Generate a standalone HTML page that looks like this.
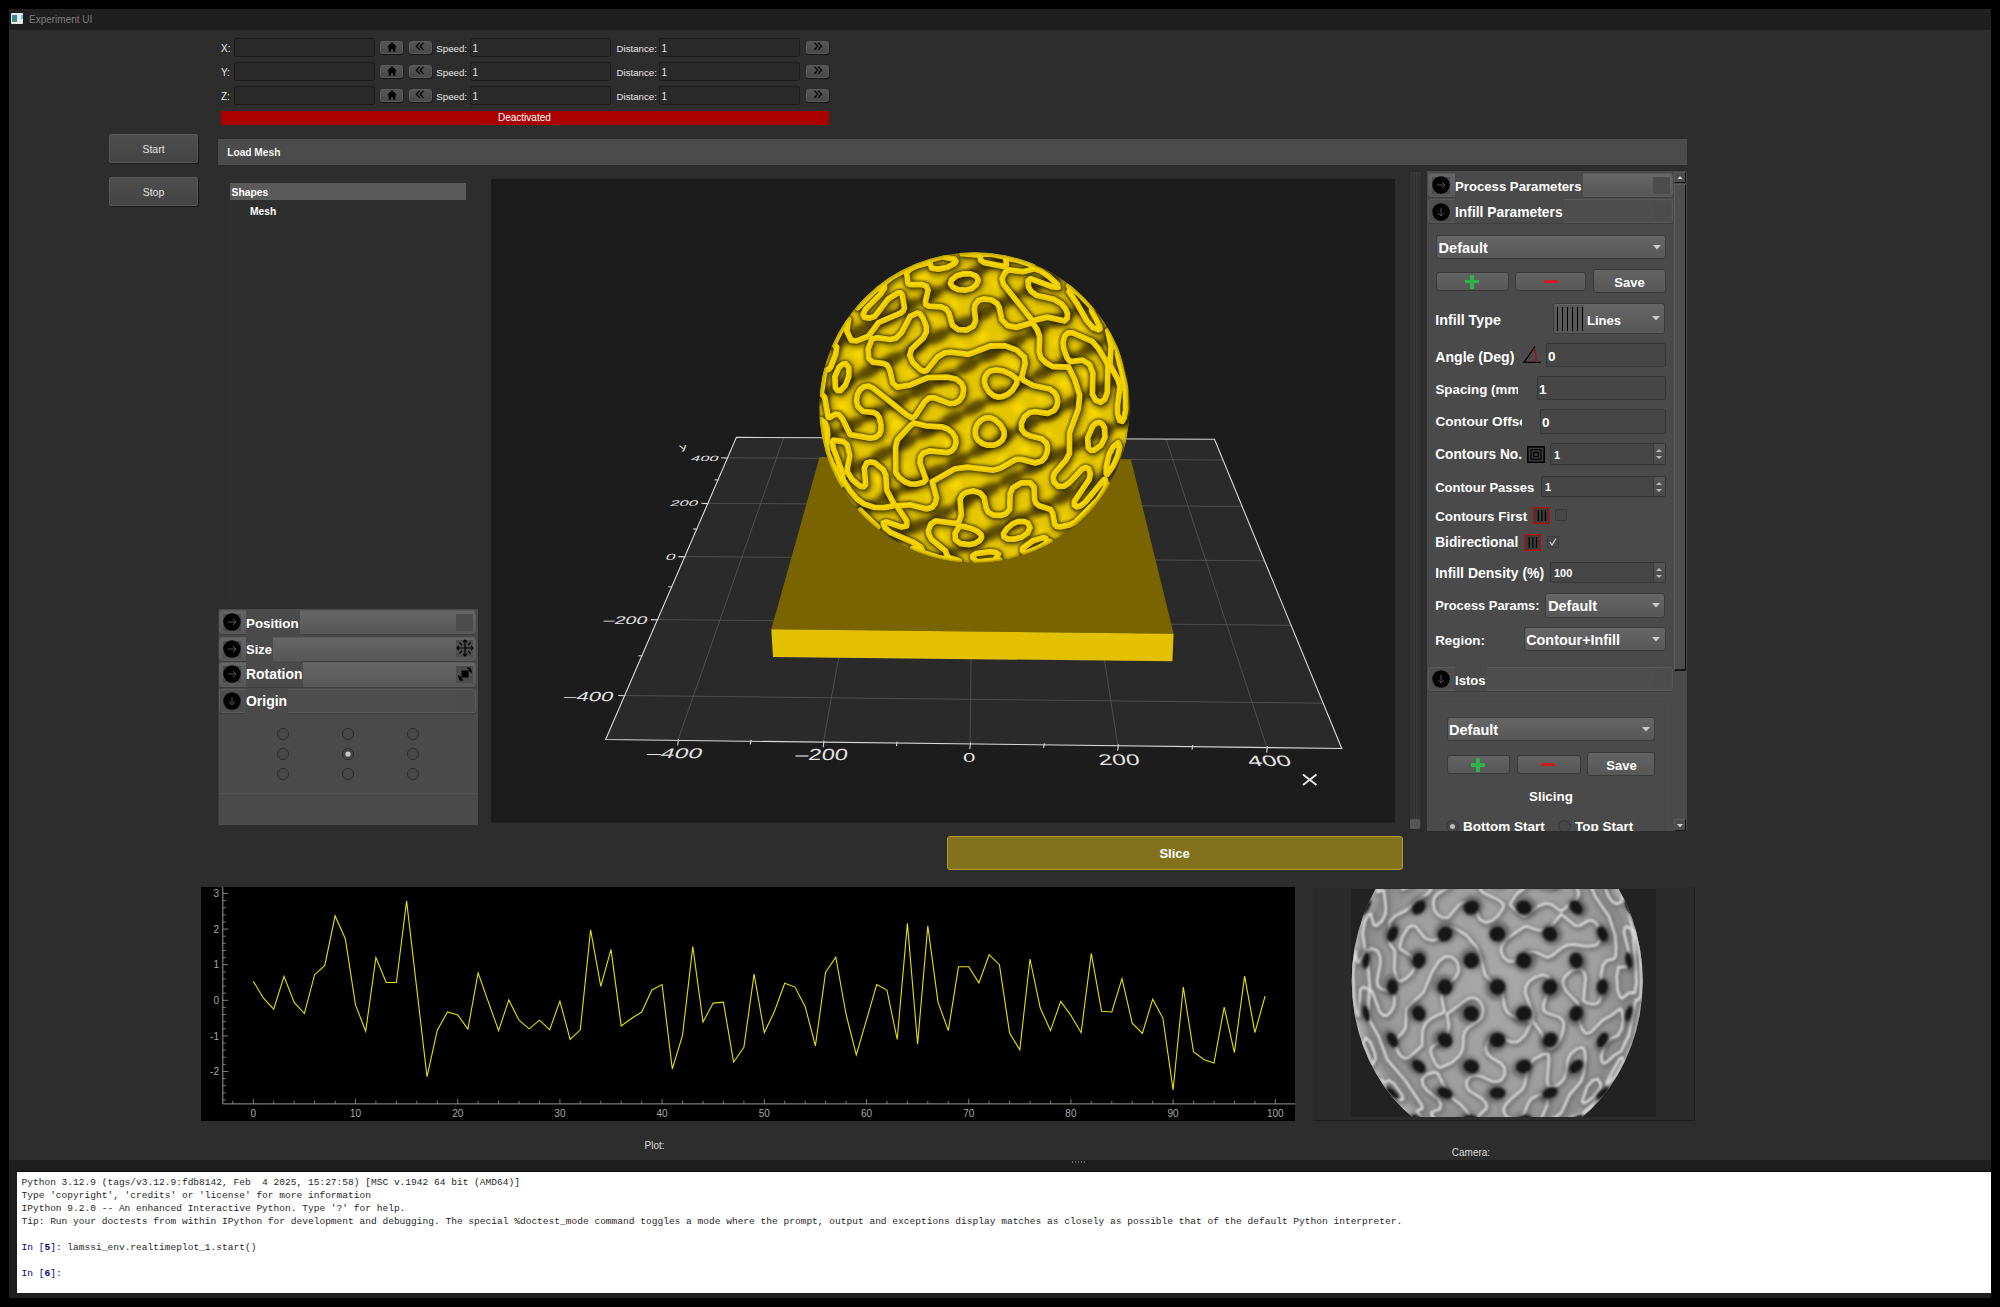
<!DOCTYPE html><html><head><meta charset="utf-8"><title>Experiment UI</title><style>
*{box-sizing:border-box;margin:0;padding:0}
html,body{width:2000px;height:1307px;overflow:hidden;background:#000}
body{position:relative;font-family:"Liberation Sans",sans-serif;color:#ddd}
.a{position:absolute}
.t{position:absolute;white-space:nowrap;line-height:1}
.inp{position:absolute;background:#2a2a2a;border:1px solid #1d1d1d;border-radius:2px}
.sb{position:absolute;background:linear-gradient(#555,#484848);border:1px solid #5a5a5a;border-radius:2.5px;box-shadow:0.5px 1px 0 #161616}
.btn{position:absolute;background:linear-gradient(#4e4e4e,#444);border:1px solid #575757;border-radius:2px;box-shadow:1px 1px 0 #1a1a1a}
.hdr{position:absolute;border:1px solid #5a5a5a;border-radius:3px;background:linear-gradient(#666,#575757);box-shadow:0 1px 0 #3e3e3e}
.hic{position:absolute;background:#4c4c4c}
.lbg{position:absolute;background:#4a4a4a}
.pin{position:absolute;background:#464646;border:1px solid #363636;border-radius:2px}
.cmb{position:absolute;background:linear-gradient(#666,#575757);border:1px solid #3c3c3c;border-radius:3px}
.pbtn{position:absolute;background:linear-gradient(#636363,#575757);border:1px solid #3a3a3a;border-radius:3px}
</style></head><body>
<div class="a" style="left:9px;top:9px;width:1982px;height:21px;background:#1f1f1f"></div>
<div class="a" style="left:9px;top:30px;width:1982px;height:1130px;background:#2d2d2d"></div>
<div class="a" style="left:9px;top:1160px;width:1982px;height:138px;background:#1e1e1e"></div>
<div class="a" style="left:11px;top:13px;width:12px;height:11px;background:#e8e8e8;border-radius:1px"></div>
<div class="a" style="left:12px;top:15px;width:5px;height:7px;background:linear-gradient(#3a7bb0,#3aa060)"></div>
<div class="a" style="left:21px;top:15px;width:2px;height:4px;background:#6cc"></div>
<div class="t" style="left:29.00px;top:14.54px;font-size:10px;color:#7c7c7c;">Experiment UI</div>
<div class="t" style="left:221.00px;top:43.53px;font-size:10px;color:#e6e6e6;">X:</div>
<div class="inp" style="left:234px;top:38px;width:141px;height:19px"></div>
<div class="sb" style="left:380px;top:40.5px;width:23px;height:13px"><svg width="10" height="10" viewBox="0 0 10 10" style="position:absolute;left:5.5px;top:0.2px"><path d="M5 0.2 L9.9 5 L8.4 5 L8.4 9.6 L6 9.6 L6 6.9 L4 6.9 L4 9.6 L1.6 9.6 L1.6 5 L0.1 5 Z" fill="#000"/></svg></div>
<div class="sb" style="left:408.5px;top:40.5px;width:23px;height:13px"><svg width="10" height="9" viewBox="0 0 10 9" style="position:absolute;left:5.5px;top:0.8px"><path d="M4.8 0.6 L1.3 4.2 L4.8 7.8 M8.6 0.6 L5.1 4.2 L8.6 7.8" stroke="#000" stroke-width="1.25" fill="none"/></svg></div>
<div class="t" style="left:436.30px;top:43.79px;font-size:9.7px;color:#e6e6e6;">Speed:</div>
<div class="inp" style="left:470px;top:38px;width:141px;height:19px"></div>
<div class="t" style="left:472.50px;top:43.53px;font-size:10px;color:#e6e6e6;">1</div>
<div class="t" style="left:616.50px;top:43.79px;font-size:9.7px;color:#e6e6e6;">Distance:</div>
<div class="inp" style="left:659px;top:38px;width:141px;height:19px"></div>
<div class="t" style="left:661.50px;top:43.53px;font-size:10px;color:#e6e6e6;">1</div>
<div class="sb" style="left:805.5px;top:40.5px;width:23px;height:13px"><svg width="10" height="9" viewBox="0 0 10 9" style="position:absolute;left:6px;top:0.8px"><path d="M1.4 0.6 L4.9 4.2 L1.4 7.8 M5.2 0.6 L8.7 4.2 L5.2 7.8" stroke="#000" stroke-width="1.25" fill="none"/></svg></div>
<div class="t" style="left:221.00px;top:67.53px;font-size:10px;color:#e6e6e6;">Y:</div>
<div class="inp" style="left:234px;top:62px;width:141px;height:19px"></div>
<div class="sb" style="left:380px;top:64.5px;width:23px;height:13px"><svg width="10" height="10" viewBox="0 0 10 10" style="position:absolute;left:5.5px;top:0.2px"><path d="M5 0.2 L9.9 5 L8.4 5 L8.4 9.6 L6 9.6 L6 6.9 L4 6.9 L4 9.6 L1.6 9.6 L1.6 5 L0.1 5 Z" fill="#000"/></svg></div>
<div class="sb" style="left:408.5px;top:64.5px;width:23px;height:13px"><svg width="10" height="9" viewBox="0 0 10 9" style="position:absolute;left:5.5px;top:0.8px"><path d="M4.8 0.6 L1.3 4.2 L4.8 7.8 M8.6 0.6 L5.1 4.2 L8.6 7.8" stroke="#000" stroke-width="1.25" fill="none"/></svg></div>
<div class="t" style="left:436.30px;top:67.79px;font-size:9.7px;color:#e6e6e6;">Speed:</div>
<div class="inp" style="left:470px;top:62px;width:141px;height:19px"></div>
<div class="t" style="left:472.50px;top:67.53px;font-size:10px;color:#e6e6e6;">1</div>
<div class="t" style="left:616.50px;top:67.79px;font-size:9.7px;color:#e6e6e6;">Distance:</div>
<div class="inp" style="left:659px;top:62px;width:141px;height:19px"></div>
<div class="t" style="left:661.50px;top:67.53px;font-size:10px;color:#e6e6e6;">1</div>
<div class="sb" style="left:805.5px;top:64.5px;width:23px;height:13px"><svg width="10" height="9" viewBox="0 0 10 9" style="position:absolute;left:6px;top:0.8px"><path d="M1.4 0.6 L4.9 4.2 L1.4 7.8 M5.2 0.6 L8.7 4.2 L5.2 7.8" stroke="#000" stroke-width="1.25" fill="none"/></svg></div>
<div class="t" style="left:221.00px;top:91.53px;font-size:10px;color:#e6e6e6;">Z:</div>
<div class="inp" style="left:234px;top:86px;width:141px;height:19px"></div>
<div class="sb" style="left:380px;top:88.5px;width:23px;height:13px"><svg width="10" height="10" viewBox="0 0 10 10" style="position:absolute;left:5.5px;top:0.2px"><path d="M5 0.2 L9.9 5 L8.4 5 L8.4 9.6 L6 9.6 L6 6.9 L4 6.9 L4 9.6 L1.6 9.6 L1.6 5 L0.1 5 Z" fill="#000"/></svg></div>
<div class="sb" style="left:408.5px;top:88.5px;width:23px;height:13px"><svg width="10" height="9" viewBox="0 0 10 9" style="position:absolute;left:5.5px;top:0.8px"><path d="M4.8 0.6 L1.3 4.2 L4.8 7.8 M8.6 0.6 L5.1 4.2 L8.6 7.8" stroke="#000" stroke-width="1.25" fill="none"/></svg></div>
<div class="t" style="left:436.30px;top:91.79px;font-size:9.7px;color:#e6e6e6;">Speed:</div>
<div class="inp" style="left:470px;top:86px;width:141px;height:19px"></div>
<div class="t" style="left:472.50px;top:91.53px;font-size:10px;color:#e6e6e6;">1</div>
<div class="t" style="left:616.50px;top:91.79px;font-size:9.7px;color:#e6e6e6;">Distance:</div>
<div class="inp" style="left:659px;top:86px;width:141px;height:19px"></div>
<div class="t" style="left:661.50px;top:91.53px;font-size:10px;color:#e6e6e6;">1</div>
<div class="sb" style="left:805.5px;top:88.5px;width:23px;height:13px"><svg width="10" height="9" viewBox="0 0 10 9" style="position:absolute;left:6px;top:0.8px"><path d="M1.4 0.6 L4.9 4.2 L1.4 7.8 M5.2 0.6 L8.7 4.2 L5.2 7.8" stroke="#000" stroke-width="1.25" fill="none"/></svg></div>
<div class="a" style="left:221px;top:110.5px;width:608px;height:14.5px;background:#ac0000"></div>
<div class="t" style="left:498.00px;top:113.33px;font-size:10px;color:#fff;">Deactivated</div>
<div class="btn" style="left:109px;top:134px;width:89px;height:29px"></div>
<div class="t" style="left:142.41px;top:144.11px;font-size:10.5px;color:#e0e0e0;">Start</div>
<div class="btn" style="left:109px;top:177px;width:89px;height:29px"></div>
<div class="t" style="left:142.70px;top:187.11px;font-size:10.5px;color:#e0e0e0;">Stop</div>
<div class="a" style="left:218px;top:139px;width:1469px;height:26px;background:#4b4b4b"></div>
<div class="t" style="left:227.20px;top:148.37px;font-size:10.2px;color:#f4f4f4;font-weight:bold;">Load Mesh</div>
<div class="a" style="left:226px;top:178px;width:247px;height:424px;background:#2e2e2e"></div>
<div class="a" style="left:230px;top:183px;width:236px;height:17px;background:#5a5a5a"></div>
<div class="t" style="left:231.60px;top:188.28px;font-size:10.3px;color:#fff;font-weight:bold;">Shapes</div>
<div class="t" style="left:250.00px;top:207.28px;font-size:10.3px;color:#fff;font-weight:bold;">Mesh</div>
<div class="a" style="left:218px;top:609px;width:260px;height:216px;background:#4a4a4a;border-left:1px solid #3a3a3a"></div>
<div class="hdr" style="left:219px;top:610px;width:257px;height:24.3px;"></div>
<div class="hic" style="left:223px;top:614px;width:18px;height:17px"></div>
<svg class="a" style="left:222.90px;top:613.40px" width="18" height="18" viewBox="-9 -9 18 18"><circle r="8.7" fill="#000"/><path d="M-4.3 0 L4 0 M1 -3 L4 0 L1 3" stroke="#5c5c5c" stroke-width="0.9" fill="none"/></svg>
<div class="lbg" style="left:245.5px;top:609.4px;width:54.2px;height:25.5px"></div>
<div class="hic" style="left:456px;top:613.5px;width:17px;height:17px"></div>
<div class="t" style="left:246.00px;top:616.90px;font-size:13.35px;color:#fff;font-weight:bold;">Position</div>
<div class="hdr" style="left:219px;top:636.6px;width:257px;height:24.1px;"></div>
<div class="hic" style="left:223px;top:640.6px;width:18px;height:17px"></div>
<svg class="a" style="left:222.90px;top:640.00px" width="18" height="18" viewBox="-9 -9 18 18"><circle r="8.7" fill="#000"/><path d="M-4.3 0 L4 0 M1 -3 L4 0 L1 3" stroke="#5c5c5c" stroke-width="0.9" fill="none"/></svg>
<div class="lbg" style="left:245.5px;top:636.0px;width:27.4px;height:25.3px"></div>
<div class="hic" style="left:456px;top:640.1px;width:17px;height:17px"></div>
<div class="t" style="left:246.00px;top:643.85px;font-size:12.94px;color:#fff;font-weight:bold;">Size</div>
<svg class="a" style="left:456px;top:639px" width="18" height="18" viewBox="0 0 18 18"><g stroke="#000" stroke-width="1.2" fill="none"><path d="M9 1 V17 M1 9 H17"/><path d="M7 3 L9 1 L11 3 M7 15 L9 17 L11 15 M3 7 L1 9 L3 11 M15 7 L17 9 L15 11"/><path d="M3.5 3.5 L6 6 M14.5 3.5 L12 6 M3.5 14.5 L6 12 M14.5 14.5 L12 12"/></g></svg>
<div class="hdr" style="left:219px;top:662px;width:257px;height:24.6px;"></div>
<div class="hic" style="left:223px;top:666px;width:18px;height:17px"></div>
<svg class="a" style="left:222.90px;top:665.40px" width="18" height="18" viewBox="-9 -9 18 18"><circle r="8.7" fill="#000"/><path d="M-4.3 0 L4 0 M1 -3 L4 0 L1 3" stroke="#5c5c5c" stroke-width="0.9" fill="none"/></svg>
<div class="lbg" style="left:245.5px;top:661.4px;width:57.9px;height:25.8px"></div>
<div class="hic" style="left:456px;top:665.5px;width:17px;height:17px"></div>
<div class="t" style="left:246.00px;top:668.43px;font-size:13.91px;color:#fff;font-weight:bold;">Rotation</div>
<svg class="a" style="left:456px;top:665px" width="18" height="18" viewBox="0 0 18 18"><rect x="5.5" y="5.5" width="7" height="7" fill="#000"/><path d="M11 2.5 A7 7 0 0 1 15.5 7.5 M7 15.5 A7 7 0 0 1 2.5 10.5" stroke="#000" stroke-width="1.2" fill="none"/><path d="M14 1.5 L15.8 7.8 L12 5.5 Z M4 16.5 L2.2 10.2 L6 12.5Z" fill="#000"/></svg>
<div class="hdr" style="left:219px;top:689px;width:257px;height:24px;background:#4e4e4e;"></div>
<div class="hic" style="left:223px;top:693px;width:18px;height:17px"></div>
<svg class="a" style="left:222.90px;top:692.40px" width="18" height="18" viewBox="-9 -9 18 18"><circle r="8.7" fill="#000"/><path d="M0 -4.3 L0 4 M-3 1 L0 4 L3 1" stroke="#5c5c5c" stroke-width="0.9" fill="none"/></svg>
<div class="lbg" style="left:245.5px;top:688.4px;width:42.6px;height:25.2px"></div>
<div class="hic" style="left:456px;top:692.5px;width:17px;height:17px"></div>
<div class="t" style="left:246.00px;top:695.38px;font-size:13.96px;color:#fff;font-weight:bold;">Origin</div>
<svg class="a" style="left:275.7px;top:727.3px" width="14" height="14" viewBox="-7 -7 14 14"><circle r="5.6" fill="#474747" stroke="#2e2e2e" stroke-width="1"/></svg>
<svg class="a" style="left:275.7px;top:747.4px" width="14" height="14" viewBox="-7 -7 14 14"><circle r="5.6" fill="#474747" stroke="#2e2e2e" stroke-width="1"/></svg>
<svg class="a" style="left:275.7px;top:767.3px" width="14" height="14" viewBox="-7 -7 14 14"><circle r="5.6" fill="#474747" stroke="#2e2e2e" stroke-width="1"/></svg>
<svg class="a" style="left:340.9px;top:727.3px" width="14" height="14" viewBox="-7 -7 14 14"><circle r="5.6" fill="#474747" stroke="#2e2e2e" stroke-width="1"/></svg>
<svg class="a" style="left:340.9px;top:747.4px" width="14" height="14" viewBox="-7 -7 14 14"><circle r="5.6" fill="#474747" stroke="#2e2e2e" stroke-width="1"/><circle r="2.6" fill="#c8c8c8"/></svg>
<svg class="a" style="left:340.9px;top:767.3px" width="14" height="14" viewBox="-7 -7 14 14"><circle r="5.6" fill="#474747" stroke="#2e2e2e" stroke-width="1"/></svg>
<svg class="a" style="left:406.0px;top:727.3px" width="14" height="14" viewBox="-7 -7 14 14"><circle r="5.6" fill="#474747" stroke="#2e2e2e" stroke-width="1"/></svg>
<svg class="a" style="left:406.0px;top:747.4px" width="14" height="14" viewBox="-7 -7 14 14"><circle r="5.6" fill="#474747" stroke="#2e2e2e" stroke-width="1"/></svg>
<svg class="a" style="left:406.0px;top:767.3px" width="14" height="14" viewBox="-7 -7 14 14"><circle r="5.6" fill="#474747" stroke="#2e2e2e" stroke-width="1"/></svg>
<div class="a" style="left:219px;top:793px;width:258px;height:1px;background:#525252"></div>
<div class="a" style="left:1409px;top:171px;width:13px;height:659px;background:#343434;border:1px solid #2a2a2a"></div>
<div class="a" style="left:1414px;top:172px;width:3px;height:646px;background:#2f2f2f;border-left:1px solid #3c3c3c;border-right:1px solid #3c3c3c"></div>
<div class="a" style="left:1410px;top:819px;width:10px;height:10px;background:#555;border-radius:2px"></div>
<div class="a" style="left:1427px;top:171px;width:260px;height:660px;background:#4a4a4a;overflow:hidden">
<div class="hdr" style="left:1px;top:2px;width:245px;height:24px;"></div>
<div class="hic" style="left:5px;top:6px;width:18px;height:17px"></div>
<svg class="a" style="left:4.90px;top:5.40px" width="18" height="18" viewBox="-9 -9 18 18"><circle r="8.7" fill="#000"/><path d="M-4.3 0 L4 0 M1 -3 L4 0 L1 3" stroke="#5c5c5c" stroke-width="0.9" fill="none"/></svg>
<div class="lbg" style="left:27.5px;top:1.4px;width:128.1px;height:25.2px"></div>
<div class="hic" style="left:226px;top:5.5px;width:17px;height:17px"></div>
<div class="t" style="left:28.00px;top:9.06px;font-size:13.16px;color:#fff;font-weight:bold;">Process Parameters</div>
<div class="hdr" style="left:1px;top:28.30000000000001px;width:245px;height:23.5px;background:#4e4e4e;"></div>
<div class="hic" style="left:5px;top:32.30000000000001px;width:18px;height:17px"></div>
<svg class="a" style="left:4.90px;top:31.70px" width="18" height="18" viewBox="-9 -9 18 18"><circle r="8.7" fill="#000"/><path d="M0 -4.3 L0 4 M-3 1 L0 4 L3 1" stroke="#5c5c5c" stroke-width="0.9" fill="none"/></svg>
<div class="lbg" style="left:27.5px;top:27.70000000000001px;width:109.1px;height:24.7px"></div>
<div class="hic" style="left:226px;top:31.80000000000001px;width:17px;height:17px"></div>
<div class="t" style="left:28.00px;top:34.79px;font-size:13.83px;color:#fff;font-weight:bold;">Infill Parameters</div>
<div class="cmb" style="left:9.0px;top:64.0px;width:230.0px;height:24.0px;"></div>
<div class="t" style="left:11.60px;top:69.71px;font-size:14.52px;color:#fff;font-weight:bold;">Default</div>
<svg class="a" style="left:225.5px;top:73.5px" width="8" height="5" viewBox="0 0 8 5"><path d="M0 0 H8 L4 4.5Z" fill="#ccc"/></svg>
<div class="pbtn" style="left:9.0px;top:101.0px;width:72.5px;height:19.0px;"></div>
<div class="a" style="left:38.0px;top:108.5px;width:14.0px;height:3.5px;background:#2db34a"></div>
<div class="a" style="left:43.3px;top:103.5px;width:3.5px;height:14.0px;background:#2db34a"></div>
<div class="pbtn" style="left:88.0px;top:101.0px;width:71.0px;height:19.0px;"></div>
<div class="a" style="left:117.0px;top:108.5px;width:14.0px;height:3.5px;background:#cc2020"></div>
<div class="pbtn" style="left:166.0px;top:98.0px;width:73.0px;height:24.0px;"></div>
<div class="t" style="left:187.30px;top:104.91px;font-size:13.1px;color:#fff;font-weight:bold;">Save</div>
<div class="t" style="left:8.20px;top:141.67px;font-size:14.33px;color:#fff;font-weight:bold;">Infill Type</div>
<div class="cmb" style="left:125.7px;top:132.0px;width:112.8px;height:31.2px;"></div>
<div class="a" style="left:127.0px;top:133.5px;width:30.0px;height:28.5px;background:#585858"></div>
<div class="a" style="left:129.5px;top:135.5px;width:1.1px;height:24.5px;background:#000"></div>
<div class="a" style="left:134.5px;top:135.5px;width:1.1px;height:24.5px;background:#000"></div>
<div class="a" style="left:139.6px;top:135.5px;width:1.1px;height:24.5px;background:#000"></div>
<div class="a" style="left:144.7px;top:135.5px;width:1.1px;height:24.5px;background:#000"></div>
<div class="a" style="left:149.7px;top:135.5px;width:1.1px;height:24.5px;background:#000"></div>
<div class="a" style="left:154.8px;top:135.5px;width:1.1px;height:24.5px;background:#000"></div>
<div class="t" style="left:160.00px;top:143.44px;font-size:13.06px;color:#fff;font-weight:bold;">Lines</div>
<svg class="a" style="left:225.0px;top:145.0px" width="8" height="5" viewBox="0 0 8 5"><path d="M0 0 H8 L4 4.5Z" fill="#ccc"/></svg>
<div class="t" style="left:8.20px;top:179.04px;font-size:14.13px;color:#fff;font-weight:bold;">Angle (Deg)</div>
<svg class="a" style="left:96px;top:174px" width="19" height="19" viewBox="0 0 19 19"><path d="M12 1.5 L1 17.3 H18" stroke="#000" stroke-width="1.3" fill="none"/><path d="M10.8 3.5 Q13.8 8 12.8 17" stroke="#b00" stroke-width="1.2" fill="none"/></svg>
<div class="pin" style="left:119.0px;top:172.3px;width:120.0px;height:24.2px;"></div>
<div class="t" style="left:121.00px;top:178.57px;font-size:13.5px;color:#fff;font-weight:bold;">0</div>
<div class="a" style="left:8px;top:204px;width:83px;height:24px;overflow:hidden"><div class="t" style="left:0.40px;top:7.69px;font-size:13.36px;color:#fff;font-weight:bold;">Spacing (mm)</div></div>
<div class="pin" style="left:109.5px;top:205.2px;width:129.5px;height:24.1px;"></div>
<div class="t" style="left:112.00px;top:211.57px;font-size:13.5px;color:#fff;font-weight:bold;">1</div>
<div class="a" style="left:8px;top:237px;width:86.5px;height:24px;overflow:hidden"><div class="t" style="left:0.40px;top:7.48px;font-size:13.61px;color:#fff;font-weight:bold;">Contour Offset</div></div>
<div class="pin" style="left:113.0px;top:238.0px;width:126.0px;height:24.6px;"></div>
<div class="t" style="left:115.00px;top:244.57px;font-size:13.5px;color:#fff;font-weight:bold;">0</div>
<div class="t" style="left:8.20px;top:277.39px;font-size:13.71px;color:#fff;font-weight:bold;">Contours No.</div>
<svg class="a" style="left:100px;top:274.5px" width="18" height="17" viewBox="0 0 18 17"><rect x="0.8" y="0.8" width="16.4" height="15.4" fill="#3a3a3a" stroke="#000" stroke-width="1.6"/><rect x="4" y="3.8" width="10" height="9.4" fill="none" stroke="#000" stroke-width="1.2"/><rect x="6.8" y="6.5" width="4.4" height="4" fill="none" stroke="#000" stroke-width="1.2"/></svg>
<div class="pin" style="left:123.0px;top:272.4px;width:116.0px;height:21.6px;"></div>
<div class="a" style="left:226.0px;top:273.4px;width:12.0px;height:19.6px;background:linear-gradient(#555,#4a4a4a);border-left:1px solid #3a3a3a"></div><svg class="a" style="left:228.0px;top:275.2px" width="8" height="16" viewBox="0 0 8 16"><path d="M1 6 L4 3 L7 6Z M1 10 L4 13 L7 10Z" fill="#bbb"/></svg>
<div class="t" style="left:127.00px;top:278.69px;font-size:11px;color:#fff;font-weight:bold;">1</div>
<div class="t" style="left:8.20px;top:309.97px;font-size:13.03px;color:#fff;font-weight:bold;">Contour Passes</div>
<div class="pin" style="left:113.5px;top:305.0px;width:125.5px;height:21.0px;"></div>
<div class="a" style="left:226.0px;top:306.0px;width:12.0px;height:19.0px;background:linear-gradient(#555,#4a4a4a);border-left:1px solid #3a3a3a"></div><svg class="a" style="left:228.0px;top:307.5px" width="8" height="16" viewBox="0 0 8 16"><path d="M1 6 L4 3 L7 6Z M1 10 L4 13 L7 10Z" fill="#bbb"/></svg>
<div class="t" style="left:118.00px;top:310.69px;font-size:11px;color:#fff;font-weight:bold;">1</div>
<div class="t" style="left:8.20px;top:338.68px;font-size:13.37px;color:#fff;font-weight:bold;">Contours First</div>
<svg class="a" style="left:106.0px;top:336.3px" width="17" height="17" viewBox="0 0 17 17"><rect x="0.7" y="0.7" width="15.6" height="15.6" fill="#3c3c3c" stroke="#b01010" stroke-width="1.4"/><rect x="4.6" y="3" width="1.3" height="11" fill="#000"/><rect x="8.2" y="3" width="1.3" height="11" fill="#000"/><rect x="11.8" y="3" width="1.3" height="11" fill="#000"/></svg>
<div class="a" style="left:128.0px;top:338.0px;width:12.0px;height:12.0px;background:#474747;border:1px solid #3a3a3a;border-radius:1px"></div>
<div class="t" style="left:8.20px;top:365.39px;font-size:13.72px;color:#fff;font-weight:bold;">Bidirectional</div>
<svg class="a" style="left:97.0px;top:363.0px" width="17" height="17" viewBox="0 0 17 17"><rect x="0.7" y="0.7" width="15.6" height="15.6" fill="#3c3c3c" stroke="#b01010" stroke-width="1.4"/><rect x="4.6" y="3" width="1.3" height="11" fill="#000"/><rect x="8.2" y="3" width="1.3" height="11" fill="#000"/><rect x="11.8" y="3" width="1.3" height="11" fill="#000"/></svg>
<div class="a" style="left:120.0px;top:365.0px;width:11.5px;height:11.7px;background:#474747;border:1px solid #3a3a3a;border-radius:1px"></div>
<svg class="a" style="left:120px;top:365px" width="12" height="12" viewBox="0 0 12 12"><path d="M3 6 L5 9 L9 2.5" stroke="#ddd" stroke-width="1.1" fill="none"/></svg>
<div class="t" style="left:8.20px;top:395.12px;font-size:14.03px;color:#fff;font-weight:bold;">Infill Density (%)</div>
<div class="pin" style="left:123.4px;top:391.0px;width:115.6px;height:21.0px;"></div>
<div class="a" style="left:226.0px;top:392.0px;width:12.0px;height:19.0px;background:linear-gradient(#555,#4a4a4a);border-left:1px solid #3a3a3a"></div><svg class="a" style="left:228.0px;top:393.5px" width="8" height="16" viewBox="0 0 8 16"><path d="M1 6 L4 3 L7 6Z M1 10 L4 13 L7 10Z" fill="#bbb"/></svg>
<div class="t" style="left:127.00px;top:397.19px;font-size:11px;color:#fff;font-weight:bold;">100</div>
<div class="t" style="left:8.20px;top:429.11px;font-size:12.86px;color:#fff;font-weight:bold;">Process Params:</div>
<div class="cmb" style="left:118.4px;top:422.0px;width:120.1px;height:24.5px;"></div>
<div class="t" style="left:121.20px;top:427.79px;font-size:14.43px;color:#fff;font-weight:bold;">Default</div>
<svg class="a" style="left:225.0px;top:431.5px" width="8" height="5" viewBox="0 0 8 5"><path d="M0 0 H8 L4 4.5Z" fill="#ccc"/></svg>
<div class="t" style="left:8.20px;top:462.67px;font-size:13.38px;color:#fff;font-weight:bold;">Region:</div>
<div class="cmb" style="left:96.8px;top:456.2px;width:142.2px;height:23.8px;"></div>
<div class="t" style="left:99.20px;top:461.81px;font-size:14.4px;color:#fff;font-weight:bold;">Contour+Infill</div>
<svg class="a" style="left:225.0px;top:465.5px" width="8" height="5" viewBox="0 0 8 5"><path d="M0 0 H8 L4 4.5Z" fill="#ccc"/></svg>
<div class="hdr" style="left:1px;top:495.70000000000005px;width:245px;height:24.1px;background:#4e4e4e;"></div>
<div class="hic" style="left:5px;top:499.70000000000005px;width:18px;height:17px"></div>
<svg class="a" style="left:4.90px;top:499.10px" width="18" height="18" viewBox="-9 -9 18 18"><circle r="8.7" fill="#000"/><path d="M0 -4.3 L0 4 M-3 1 L0 4 L3 1" stroke="#5c5c5c" stroke-width="0.9" fill="none"/></svg>
<div class="lbg" style="left:27.5px;top:495.1px;width:32.1px;height:25.3px"></div>
<div class="hic" style="left:226px;top:499.20000000000005px;width:17px;height:17px"></div>
<div class="t" style="left:28.00px;top:502.80px;font-size:13.11px;color:#fff;font-weight:bold;">Istos</div>
<div class="a" style="left:9.7px;top:530.0px;width:228.3px;height:199.0px;border:1px solid #474747;border-radius:2px"></div>
<div class="cmb" style="left:20.0px;top:546.0px;width:208.0px;height:24.3px;"></div>
<div class="t" style="left:22.00px;top:551.71px;font-size:14.52px;color:#fff;font-weight:bold;">Default</div>
<svg class="a" style="left:215.0px;top:555.5px" width="8" height="5" viewBox="0 0 8 5"><path d="M0 0 H8 L4 4.5Z" fill="#ccc"/></svg>
<div class="pbtn" style="left:20.0px;top:583.8px;width:63.0px;height:19.7px;"></div>
<div class="a" style="left:44.0px;top:592.0px;width:14.0px;height:3.5px;background:#2db34a"></div>
<div class="a" style="left:49.3px;top:586.8px;width:3.5px;height:14.0px;background:#2db34a"></div>
<div class="pbtn" style="left:90.0px;top:583.8px;width:64.0px;height:19.7px;"></div>
<div class="a" style="left:114.0px;top:591.5px;width:14.0px;height:3.5px;background:#cc2020"></div>
<div class="pbtn" style="left:159.5px;top:580.7px;width:68.5px;height:24.3px;"></div>
<div class="t" style="left:179.30px;top:587.91px;font-size:13.1px;color:#fff;font-weight:bold;">Save</div>
<div class="t" style="left:102.00px;top:618.67px;font-size:13.39px;color:#fff;font-weight:bold;">Slicing</div>
<svg class="a" style="left:19px;top:649px" width="13" height="13" viewBox="-6.5 -6.5 13 13"><circle r="5.8" fill="#474747" stroke="#333" stroke-width="1"/><circle r="2.5" fill="#bbb"/></svg>
<div class="t" style="left:36.00px;top:649.07px;font-size:13.5px;color:#fff;font-weight:bold;">Bottom Start</div>
<svg class="a" style="left:131px;top:649px" width="13" height="13" viewBox="-6.5 -6.5 13 13"><circle r="5.8" fill="#474747" stroke="#333" stroke-width="1"/></svg>
<div class="t" style="left:148.00px;top:649.07px;font-size:13.5px;color:#fff;font-weight:bold;">Top Start</div>
</div>
<div class="a" style="left:1674px;top:171px;width:13px;height:660px;background:#4a4a4a"></div>
<div class="a" style="left:1674px;top:172px;width:12px;height:11px;background:#4c4c4c;border:1px solid #585858;border-right:1.5px solid #0c0c0c;border-bottom:1px solid #1a1a1a"></div>
<svg class="a" style="left:1677px;top:175.5px" width="6" height="3.5" viewBox="0 0 6 3.5"><path d="M0 3.5 L3 0 L6 3.5Z" fill="#d0d0d0"/></svg>
<div class="a" style="left:1674px;top:184px;width:12px;height:486.5px;background:#4e4e4e;border-left:1.5px solid #5c5c5c;border-top:1px solid #5a5a5a;border-right:1.5px solid #0c0c0c;border-bottom:2px solid #151515"></div>
<div class="a" style="left:1674px;top:819px;width:12px;height:12px;background:#4c4c4c;border:1px solid #585858;border-right:1.5px solid #0c0c0c;border-bottom:1px solid #1a1a1a"></div>
<svg class="a" style="left:1677px;top:823.5px" width="6" height="3.5" viewBox="0 0 6 3.5"><path d="M0 0 L3 3.5 L6 0Z" fill="#d0d0d0"/></svg>
<div class="a" style="left:947px;top:836px;width:456px;height:34px;background:#82721e;border:1px solid #b49a1c;border-radius:3px"></div>
<div class="t" style="left:1159.42px;top:847.00px;font-size:13px;color:#fff;font-weight:bold;">Slice</div>
<svg class="a" style="left:491px;top:179px" width="904" height="643.5" viewBox="491 179 904 643.5">
<rect x="491" y="179" width="904" height="643.5" fill="#1c1c1c"/>
<polygon points="605.6,739.5 1341.8,748.5 1214.5,439.3 736.4,437.4" fill="#2a2a2a"/>
<path d="M677.9 740.4L783.7 437.6M624.7 695.5L1323.1 703.2M823.4 742.2L878.5 438.0M657.5 619.6L1291.1 625.3M970.0 744.0L973.9 438.3M684.8 556.6L1264.5 560.8M1117.9 745.8L1069.8 438.7M707.8 503.3L1242.1 506.4M1266.9 747.6L1166.1 439.1M727.6 457.8L1223.0 460.0" stroke="#575757" stroke-width="0.8" fill="none"/>
<polygon points="605.6,739.5 1341.8,748.5 1214.5,439.3 736.4,437.4" fill="none" stroke="#d8d8d8" stroke-width="1.1"/>
<path d="M678.5 738.9L677.7 745.4M751.1 739.8L750.3 744.3M824.0 740.7L823.2 747.2M897.2 741.6L896.4 746.1M970.6 742.5L969.8 749.0M1044.4 743.4L1043.6 747.9M1118.5 744.3L1117.7 750.8M1192.8 745.2L1192.0 749.7M1267.5 746.1L1266.7 752.6M625.2 695.8L618.2 695.5M642.4 656.0L638.4 655.7M658.0 619.9L651.0 619.6M672.2 587.0L668.2 586.7M685.3 556.9L678.3 556.6M697.3 529.2L693.3 528.9M708.3 503.6L701.3 503.3M718.6 480.0L714.6 479.7M728.1 458.1L721.1 457.8" stroke="#d8d8d8" stroke-width="1.1" fill="none"/>
<text x="0" y="0" transform="translate(645.7,758.0) scale(2.470,1.397) skewX(-12)" font-family="Liberation Sans" font-size="10" fill="#e2e2e2">–400</text>
<text x="0" y="0" transform="translate(794.7,760.0) scale(2.359,1.606) skewX(-6)" font-family="Liberation Sans" font-size="10" fill="#e2e2e2">–200</text>
<text x="0" y="0" transform="translate(963.1,761.5) scale(2.224,1.355) skewX(0)" font-family="Liberation Sans" font-size="10" fill="#e2e2e2">0</text>
<text x="0" y="0" transform="translate(1099.3,764.5) scale(2.465,1.550) skewX(6)" font-family="Liberation Sans" font-size="10" fill="#e2e2e2">200</text>
<text x="0" y="0" transform="translate(1249.6,766.0) scale(2.570,1.508) skewX(12)" font-family="Liberation Sans" font-size="10" fill="#e2e2e2">400</text>
<text x="0" y="0" transform="translate(690.3,460.5) scale(1.637,0.768) skewX(-12)" font-family="Liberation Sans" font-size="10" fill="#e2e2e2">400</text>
<text x="0" y="0" transform="translate(669.3,506.3) scale(1.668,0.810) skewX(-12)" font-family="Liberation Sans" font-size="10" fill="#e2e2e2">200</text>
<text x="0" y="0" transform="translate(664.8,559.5) scale(1.742,0.908) skewX(-12)" font-family="Liberation Sans" font-size="10" fill="#e2e2e2">0</text>
<text x="0" y="0" transform="translate(602.7,623.5) scale(1.970,1.103) skewX(-10)" font-family="Liberation Sans" font-size="10" fill="#e2e2e2">–200</text>
<text x="0" y="0" transform="translate(563.1,700.5) scale(2.215,1.327) skewX(-10)" font-family="Liberation Sans" font-size="10" fill="#e2e2e2">–400</text>
<path d="M1303 774.5 L1316.5 785 M1316.5 774.5 L1303 785" stroke="#e6e6e6" stroke-width="2" fill="none"/>
<text x="0" y="0" transform="translate(680.6,450) scale(1.35,0.75) rotate(-12)" font-family="Liberation Sans" font-size="11" fill="#e2e2e2">y</text>
<polygon points="819.6,457 1130.9,459.2 1173.6,633.7 771.3,629.3" fill="#796400"/>
<polygon points="771.3,629.3 1173.6,633.7 1172.4,661.3 773,657" fill="#e3c000"/>
<defs>
<clipPath id="sc"><circle cx="974.5" cy="407.5" r="155.3"/></clipPath>
<radialGradient id="sg" cx="974.5" cy="407.5" r="155.3" gradientUnits="userSpaceOnUse"><stop offset="0" stop-color="#e8c800"/><stop offset="0.8" stop-color="#d8b800"/><stop offset="1" stop-color="#b09200"/></radialGradient>
<filter id="bl" x="-10%" y="-10%" width="120%" height="120%"><feGaussianBlur stdDeviation="2.6"/></filter>
<filter id="bl2" x="-10%" y="-10%" width="120%" height="120%"><feGaussianBlur stdDeviation="0.8"/></filter>
</defs>
<g clip-path="url(#sc)">
<circle cx="974.5" cy="407.5" r="155.3" fill="#e4c600"/>
<g fill="#201800" opacity="0.7" filter="url(#bl)"><ellipse cx="855.5" cy="288.5" rx="14" ry="6.5" transform="rotate(-27 855.5 288.5)"/><ellipse cx="878.7" cy="276.7" rx="14" ry="6.5" transform="rotate(-27 878.7 276.7)"/><ellipse cx="901.9" cy="264.9" rx="14" ry="6.5" transform="rotate(-27 901.9 264.9)"/><ellipse cx="925.0" cy="253.1" rx="14" ry="6.5" transform="rotate(-27 925.0 253.1)"/><ellipse cx="948.2" cy="241.3" rx="14" ry="6.5" transform="rotate(-27 948.2 241.3)"/><ellipse cx="815.8" cy="353.7" rx="14" ry="6.5" transform="rotate(-27 815.8 353.7)"/><ellipse cx="838.9" cy="341.9" rx="14" ry="6.5" transform="rotate(-27 838.9 341.9)"/><ellipse cx="862.1" cy="330.1" rx="14" ry="6.5" transform="rotate(-27 862.1 330.1)"/><ellipse cx="885.3" cy="318.3" rx="14" ry="6.5" transform="rotate(-27 885.3 318.3)"/><ellipse cx="908.4" cy="306.5" rx="14" ry="6.5" transform="rotate(-27 908.4 306.5)"/><ellipse cx="931.6" cy="294.7" rx="14" ry="6.5" transform="rotate(-27 931.6 294.7)"/><ellipse cx="954.8" cy="282.9" rx="14" ry="6.5" transform="rotate(-27 954.8 282.9)"/><ellipse cx="977.9" cy="271.1" rx="14" ry="6.5" transform="rotate(-27 977.9 271.1)"/><ellipse cx="1001.1" cy="259.3" rx="14" ry="6.5" transform="rotate(-27 1001.1 259.3)"/><ellipse cx="1024.3" cy="247.5" rx="14" ry="6.5" transform="rotate(-27 1024.3 247.5)"/><ellipse cx="822.3" cy="395.2" rx="14" ry="6.5" transform="rotate(-27 822.3 395.2)"/><ellipse cx="845.5" cy="383.4" rx="14" ry="6.5" transform="rotate(-27 845.5 383.4)"/><ellipse cx="868.7" cy="371.6" rx="14" ry="6.5" transform="rotate(-27 868.7 371.6)"/><ellipse cx="891.8" cy="359.8" rx="14" ry="6.5" transform="rotate(-27 891.8 359.8)"/><ellipse cx="915.0" cy="348.0" rx="14" ry="6.5" transform="rotate(-27 915.0 348.0)"/><ellipse cx="938.2" cy="336.2" rx="14" ry="6.5" transform="rotate(-27 938.2 336.2)"/><ellipse cx="961.3" cy="324.4" rx="14" ry="6.5" transform="rotate(-27 961.3 324.4)"/><ellipse cx="984.5" cy="312.6" rx="14" ry="6.5" transform="rotate(-27 984.5 312.6)"/><ellipse cx="1007.7" cy="300.8" rx="14" ry="6.5" transform="rotate(-27 1007.7 300.8)"/><ellipse cx="1030.8" cy="289.0" rx="14" ry="6.5" transform="rotate(-27 1030.8 289.0)"/><ellipse cx="1054.0" cy="277.2" rx="14" ry="6.5" transform="rotate(-27 1054.0 277.2)"/><ellipse cx="805.8" cy="448.6" rx="14" ry="6.5" transform="rotate(-27 805.8 448.6)"/><ellipse cx="828.9" cy="436.8" rx="14" ry="6.5" transform="rotate(-27 828.9 436.8)"/><ellipse cx="852.1" cy="425.0" rx="14" ry="6.5" transform="rotate(-27 852.1 425.0)"/><ellipse cx="875.3" cy="413.2" rx="14" ry="6.5" transform="rotate(-27 875.3 413.2)"/><ellipse cx="898.4" cy="401.4" rx="14" ry="6.5" transform="rotate(-27 898.4 401.4)"/><ellipse cx="921.6" cy="389.6" rx="14" ry="6.5" transform="rotate(-27 921.6 389.6)"/><ellipse cx="944.8" cy="377.8" rx="14" ry="6.5" transform="rotate(-27 944.8 377.8)"/><ellipse cx="967.9" cy="366.0" rx="14" ry="6.5" transform="rotate(-27 967.9 366.0)"/><ellipse cx="991.1" cy="354.2" rx="14" ry="6.5" transform="rotate(-27 991.1 354.2)"/><ellipse cx="1014.3" cy="342.4" rx="14" ry="6.5" transform="rotate(-27 1014.3 342.4)"/><ellipse cx="1037.4" cy="330.5" rx="14" ry="6.5" transform="rotate(-27 1037.4 330.5)"/><ellipse cx="1060.6" cy="318.7" rx="14" ry="6.5" transform="rotate(-27 1060.6 318.7)"/><ellipse cx="1083.8" cy="306.9" rx="14" ry="6.5" transform="rotate(-27 1083.8 306.9)"/><ellipse cx="1106.9" cy="295.1" rx="14" ry="6.5" transform="rotate(-27 1106.9 295.1)"/><ellipse cx="835.5" cy="478.3" rx="14" ry="6.5" transform="rotate(-27 835.5 478.3)"/><ellipse cx="858.7" cy="466.5" rx="14" ry="6.5" transform="rotate(-27 858.7 466.5)"/><ellipse cx="881.8" cy="454.7" rx="14" ry="6.5" transform="rotate(-27 881.8 454.7)"/><ellipse cx="905.0" cy="442.9" rx="14" ry="6.5" transform="rotate(-27 905.0 442.9)"/><ellipse cx="928.2" cy="431.1" rx="14" ry="6.5" transform="rotate(-27 928.2 431.1)"/><ellipse cx="951.3" cy="419.3" rx="14" ry="6.5" transform="rotate(-27 951.3 419.3)"/><ellipse cx="974.5" cy="407.5" rx="14" ry="6.5" transform="rotate(-27 974.5 407.5)"/><ellipse cx="997.7" cy="395.7" rx="14" ry="6.5" transform="rotate(-27 997.7 395.7)"/><ellipse cx="1020.8" cy="383.9" rx="14" ry="6.5" transform="rotate(-27 1020.8 383.9)"/><ellipse cx="1044.0" cy="372.1" rx="14" ry="6.5" transform="rotate(-27 1044.0 372.1)"/><ellipse cx="1067.2" cy="360.3" rx="14" ry="6.5" transform="rotate(-27 1067.2 360.3)"/><ellipse cx="1090.3" cy="348.5" rx="14" ry="6.5" transform="rotate(-27 1090.3 348.5)"/><ellipse cx="1113.5" cy="336.7" rx="14" ry="6.5" transform="rotate(-27 1113.5 336.7)"/><ellipse cx="842.1" cy="519.9" rx="14" ry="6.5" transform="rotate(-27 842.1 519.9)"/><ellipse cx="865.2" cy="508.1" rx="14" ry="6.5" transform="rotate(-27 865.2 508.1)"/><ellipse cx="888.4" cy="496.3" rx="14" ry="6.5" transform="rotate(-27 888.4 496.3)"/><ellipse cx="911.6" cy="484.5" rx="14" ry="6.5" transform="rotate(-27 911.6 484.5)"/><ellipse cx="934.7" cy="472.6" rx="14" ry="6.5" transform="rotate(-27 934.7 472.6)"/><ellipse cx="957.9" cy="460.8" rx="14" ry="6.5" transform="rotate(-27 957.9 460.8)"/><ellipse cx="981.1" cy="449.0" rx="14" ry="6.5" transform="rotate(-27 981.1 449.0)"/><ellipse cx="1004.2" cy="437.2" rx="14" ry="6.5" transform="rotate(-27 1004.2 437.2)"/><ellipse cx="1027.4" cy="425.4" rx="14" ry="6.5" transform="rotate(-27 1027.4 425.4)"/><ellipse cx="1050.6" cy="413.6" rx="14" ry="6.5" transform="rotate(-27 1050.6 413.6)"/><ellipse cx="1073.7" cy="401.8" rx="14" ry="6.5" transform="rotate(-27 1073.7 401.8)"/><ellipse cx="1096.9" cy="390.0" rx="14" ry="6.5" transform="rotate(-27 1096.9 390.0)"/><ellipse cx="1120.1" cy="378.2" rx="14" ry="6.5" transform="rotate(-27 1120.1 378.2)"/><ellipse cx="1143.2" cy="366.4" rx="14" ry="6.5" transform="rotate(-27 1143.2 366.4)"/><ellipse cx="895.0" cy="537.8" rx="14" ry="6.5" transform="rotate(-27 895.0 537.8)"/><ellipse cx="918.2" cy="526.0" rx="14" ry="6.5" transform="rotate(-27 918.2 526.0)"/><ellipse cx="941.3" cy="514.2" rx="14" ry="6.5" transform="rotate(-27 941.3 514.2)"/><ellipse cx="964.5" cy="502.4" rx="14" ry="6.5" transform="rotate(-27 964.5 502.4)"/><ellipse cx="987.7" cy="490.6" rx="14" ry="6.5" transform="rotate(-27 987.7 490.6)"/><ellipse cx="1010.8" cy="478.8" rx="14" ry="6.5" transform="rotate(-27 1010.8 478.8)"/><ellipse cx="1034.0" cy="467.0" rx="14" ry="6.5" transform="rotate(-27 1034.0 467.0)"/><ellipse cx="1057.2" cy="455.2" rx="14" ry="6.5" transform="rotate(-27 1057.2 455.2)"/><ellipse cx="1080.3" cy="443.4" rx="14" ry="6.5" transform="rotate(-27 1080.3 443.4)"/><ellipse cx="1103.5" cy="431.6" rx="14" ry="6.5" transform="rotate(-27 1103.5 431.6)"/><ellipse cx="1126.7" cy="419.8" rx="14" ry="6.5" transform="rotate(-27 1126.7 419.8)"/><ellipse cx="924.7" cy="567.5" rx="14" ry="6.5" transform="rotate(-27 924.7 567.5)"/><ellipse cx="947.9" cy="555.7" rx="14" ry="6.5" transform="rotate(-27 947.9 555.7)"/><ellipse cx="971.1" cy="543.9" rx="14" ry="6.5" transform="rotate(-27 971.1 543.9)"/><ellipse cx="994.2" cy="532.1" rx="14" ry="6.5" transform="rotate(-27 994.2 532.1)"/><ellipse cx="1017.4" cy="520.3" rx="14" ry="6.5" transform="rotate(-27 1017.4 520.3)"/><ellipse cx="1040.6" cy="508.5" rx="14" ry="6.5" transform="rotate(-27 1040.6 508.5)"/><ellipse cx="1063.7" cy="496.7" rx="14" ry="6.5" transform="rotate(-27 1063.7 496.7)"/><ellipse cx="1086.9" cy="484.9" rx="14" ry="6.5" transform="rotate(-27 1086.9 484.9)"/><ellipse cx="1110.1" cy="473.1" rx="14" ry="6.5" transform="rotate(-27 1110.1 473.1)"/><ellipse cx="1133.2" cy="461.3" rx="14" ry="6.5" transform="rotate(-27 1133.2 461.3)"/><ellipse cx="1000.8" cy="573.7" rx="14" ry="6.5" transform="rotate(-27 1000.8 573.7)"/><ellipse cx="1024.0" cy="561.9" rx="14" ry="6.5" transform="rotate(-27 1024.0 561.9)"/><ellipse cx="1047.1" cy="550.1" rx="14" ry="6.5" transform="rotate(-27 1047.1 550.1)"/><ellipse cx="1070.3" cy="538.3" rx="14" ry="6.5" transform="rotate(-27 1070.3 538.3)"/><ellipse cx="1093.5" cy="526.5" rx="14" ry="6.5" transform="rotate(-27 1093.5 526.5)"/></g>
<g fill="#ffe000" opacity="0.7" filter="url(#bl)"><circle cx="829.9" cy="324.1" r="6"/><circle cx="853.0" cy="312.3" r="6"/><circle cx="876.2" cy="300.5" r="6"/><circle cx="899.4" cy="288.7" r="6"/><circle cx="922.5" cy="276.9" r="6"/><circle cx="945.7" cy="265.1" r="6"/><circle cx="968.9" cy="253.2" r="6"/><circle cx="992.0" cy="241.4" r="6"/><circle cx="813.3" cy="377.4" r="6"/><circle cx="836.4" cy="365.6" r="6"/><circle cx="859.6" cy="353.8" r="6"/><circle cx="882.8" cy="342.0" r="6"/><circle cx="905.9" cy="330.2" r="6"/><circle cx="929.1" cy="318.4" r="6"/><circle cx="952.3" cy="306.6" r="6"/><circle cx="975.4" cy="294.8" r="6"/><circle cx="998.6" cy="283.0" r="6"/><circle cx="1021.8" cy="271.2" r="6"/><circle cx="1044.9" cy="259.4" r="6"/><circle cx="819.8" cy="419.0" r="6"/><circle cx="843.0" cy="407.2" r="6"/><circle cx="866.2" cy="395.4" r="6"/><circle cx="889.3" cy="383.5" r="6"/><circle cx="912.5" cy="371.7" r="6"/><circle cx="935.7" cy="359.9" r="6"/><circle cx="958.8" cy="348.1" r="6"/><circle cx="982.0" cy="336.3" r="6"/><circle cx="1005.2" cy="324.5" r="6"/><circle cx="1028.3" cy="312.7" r="6"/><circle cx="1051.5" cy="300.9" r="6"/><circle cx="1074.7" cy="289.1" r="6"/><circle cx="826.4" cy="460.5" r="6"/><circle cx="849.6" cy="448.7" r="6"/><circle cx="872.8" cy="436.9" r="6"/><circle cx="895.9" cy="425.1" r="6"/><circle cx="919.1" cy="413.3" r="6"/><circle cx="942.3" cy="401.5" r="6"/><circle cx="965.4" cy="389.7" r="6"/><circle cx="988.6" cy="377.9" r="6"/><circle cx="1011.8" cy="366.1" r="6"/><circle cx="1034.9" cy="354.3" r="6"/><circle cx="1058.1" cy="342.5" r="6"/><circle cx="1081.3" cy="330.7" r="6"/><circle cx="1104.4" cy="318.9" r="6"/><circle cx="833.0" cy="502.0" r="6"/><circle cx="856.2" cy="490.2" r="6"/><circle cx="879.3" cy="478.4" r="6"/><circle cx="902.5" cy="466.6" r="6"/><circle cx="925.7" cy="454.8" r="6"/><circle cx="948.8" cy="443.0" r="6"/><circle cx="972.0" cy="431.2" r="6"/><circle cx="995.2" cy="419.4" r="6"/><circle cx="1018.3" cy="407.6" r="6"/><circle cx="1041.5" cy="395.8" r="6"/><circle cx="1064.7" cy="384.0" r="6"/><circle cx="1087.8" cy="372.2" r="6"/><circle cx="1111.0" cy="360.4" r="6"/><circle cx="1134.2" cy="348.6" r="6"/><circle cx="862.7" cy="531.8" r="6"/><circle cx="885.9" cy="520.0" r="6"/><circle cx="909.1" cy="508.2" r="6"/><circle cx="932.2" cy="496.4" r="6"/><circle cx="955.4" cy="484.6" r="6"/><circle cx="978.6" cy="472.8" r="6"/><circle cx="1001.7" cy="461.0" r="6"/><circle cx="1024.9" cy="449.2" r="6"/><circle cx="1048.1" cy="437.4" r="6"/><circle cx="1071.2" cy="425.5" r="6"/><circle cx="1094.4" cy="413.7" r="6"/><circle cx="1117.6" cy="401.9" r="6"/><circle cx="1140.7" cy="390.1" r="6"/><circle cx="892.5" cy="561.5" r="6"/><circle cx="915.7" cy="549.7" r="6"/><circle cx="938.8" cy="537.9" r="6"/><circle cx="962.0" cy="526.1" r="6"/><circle cx="985.1" cy="514.3" r="6"/><circle cx="1008.3" cy="502.5" r="6"/><circle cx="1031.5" cy="490.7" r="6"/><circle cx="1054.6" cy="478.9" r="6"/><circle cx="1077.8" cy="467.1" r="6"/><circle cx="1101.0" cy="455.3" r="6"/><circle cx="1124.1" cy="443.5" r="6"/><circle cx="1147.3" cy="431.7" r="6"/><circle cx="945.4" cy="579.5" r="6"/><circle cx="968.6" cy="567.7" r="6"/><circle cx="991.7" cy="555.8" r="6"/><circle cx="1014.9" cy="544.0" r="6"/><circle cx="1038.1" cy="532.2" r="6"/><circle cx="1061.2" cy="520.4" r="6"/><circle cx="1084.4" cy="508.6" r="6"/><circle cx="1107.6" cy="496.8" r="6"/><circle cx="1130.7" cy="485.0" r="6"/></g>
<path d="M1004.7 266.7L984.1 262.7L980.6 260.2L980.3 256.2L978.7 255.1L962.2 253.7L991.7 254.1L1018.7 259.6L1032.7 265.2L1017.8 260.2L1007.7 258.5L1005.8 259.2L1006.5 264.7ZM959.2 560.7L939.2 557.8L914.7 549.8L912.7 548.2L922.2 549.9L920.5 546.7L913.7 542.5L890.8 532.7L884.5 527.2L883.2 522.7L886.7 522.0L901.7 527.0L906.7 525.9L906.8 521.2L897.9 507.7L898.5 505.7L909.7 504.8L926.7 508.9L932.2 507.3L935.3 503.2L936.6 497.7L932.2 481.7L954.7 468.9L967.2 467.1L993.2 470.2L1000.2 468.2L1015.7 459.4L1021.7 459.4L1035.2 462.9L1041.7 461.0L1045.1 457.2L1047.1 452.2L1047.6 447.2L1046.3 442.7L1041.7 438.8L1029.5 435.7L1024.7 433.3L1021.6 429.2L1021.3 423.7L1024.4 416.7L1029.7 412.5L1035.2 411.7L1047.7 413.3L1053.9 410.7L1056.6 406.7L1057.7 401.7L1056.9 396.7L1054.7 392.6L1049.7 389.0L1033.2 385.5L1023.3 380.2L1021.7 377.2L1025.2 363.7L1024.4 357.2L1016.7 350.1L1004.7 345.6L990.2 346.0L968.7 354.3L950.7 352.2L944.7 352.8L937.4 357.2L926.7 370.5L924.2 371.3L920.7 370.0L912.7 362.4L909.7 355.2L911.5 349.2L923.1 338.2L926.4 331.7L926.2 326.2L923.2 318.5L920.2 313.9L917.2 313.0L910.2 316.3L901.7 332.4L896.2 338.1L890.2 339.5L876.7 337.7L872.0 339.2L868.1 349.2L868.7 358.4L872.7 362.1L883.2 363.3L887.2 365.2L889.7 369.6L892.7 383.1L897.2 387.1L909.8 385.2L927.7 377.6L947.2 377.1L956.2 379.0L961.5 383.2L963.7 388.7L962.7 395.7L958.7 401.2L954.7 403.2L949.7 403.6L934.2 397.7L929.2 397.8L924.7 401.6L915.2 416.3L912.2 417.9L906.2 414.5L873.2 388.2L868.7 386.2L864.2 386.6L860.2 389.5L857.3 394.7L856.4 400.7L857.6 406.2L862.7 411.3L873.2 412.4L876.7 413.9L879.3 417.7L881.0 424.7L880.9 430.7L879.1 434.7L875.2 437.4L870.2 438.1L850.2 434.6L842.4 418.7L838.7 414.5L835.7 414.1L829.7 417.6L828.2 417.3L824.7 397.2L821.2 393.7L824.7 370.7L828.7 369.2L830.7 367.1L835.7 354.2L836.7 347.0L833.7 344.7L840.6 330.7L848.6 319.2L846.9 331.2L851.2 340.3L856.7 340.9L868.4 336.2L878.4 322.7L900.4 313.2L903.3 310.7L904.4 307.7L902.2 294.7L900.7 292.8L898.2 292.8L888.2 298.9L874.7 316.4L869.7 318.0L864.2 317.3L863.1 314.2L865.5 309.2L880.8 293.7L884.5 288.2L884.5 286.2L882.7 286.0L874.7 290.2L892.7 276.6L909.2 267.6L928.7 260.1L942.2 256.7L954.3 259.2L956.0 261.2L954.5 263.7L947.2 267.4L938.2 269.2L931.7 268.2L929.7 262.5L915.6 266.2L910.0 269.2L906.6 272.7L908.0 283.7L910.2 284.7L921.7 284.4L926.4 286.2L928.1 290.2L925.5 301.2L925.8 304.7L928.7 306.1L941.2 306.8L946.2 309.1L949.0 313.2L952.4 325.2L958.2 329.7L966.7 330.0L973.4 326.2L975.6 320.7L974.3 309.2L975.0 304.7L978.2 300.6L983.7 298.9L991.2 299.8L996.9 303.2L999.1 307.2L1001.8 319.7L1007.7 325.7L1016.2 327.4L1030.7 323.1L1033.2 323.7L1037.2 329.7L1039.6 336.2L1039.1 352.2L1040.9 357.7L1046.2 362.9L1052.7 366.5L1068.7 367.2L1074.7 379.6L1079.6 395.2L1078.4 408.7L1069.5 432.7L1069.4 453.7L1065.9 460.2L1054.5 473.2L1053.1 477.7L1054.0 482.2L1058.2 486.3L1064.2 486.1L1069.7 482.3L1082.2 468.9L1085.7 467.5L1088.7 468.7L1090.4 473.7L1089.0 479.7L1074.5 501.2L1074.3 505.2L1076.7 506.9L1080.7 505.7L1085.7 501.7L1104.2 479.4L1105.4 479.7L1105.8 485.2L1107.7 484.4L1098.2 499.4L1075.2 522.1L1069.7 524.9L1060.2 526.9L1056.7 526.4L1054.7 524.4L1052.6 513.2L1050.7 509.6L1039.1 505.7L1035.9 503.2L1034.5 499.2L1034.1 487.2L1030.1 482.7L1021.2 482.9L1012.9 487.7L1010.1 493.7L1009.7 509.3L1006.2 513.4L1000.7 515.4L993.2 515.0L988.3 512.2L986.2 508.2L984.2 497.7L980.2 493.0L973.2 490.9L965.7 492.5L962.2 495.2L960.1 499.2L961.3 514.7L958.7 522.2L955.2 523.4L935.7 520.8L930.9 524.2L928.4 530.2L928.9 534.7L931.3 539.2L945.4 550.7L947.8 557.2ZM1064.7 320.9L1047.2 317.1L1033.7 320.4L1031.7 319.7L1003.4 284.2L1001.9 278.7L1004.7 272.9L1008.7 269.9L1022.7 271.7L1034.7 268.8L1040.7 270.9L1048.7 276.4L1057.2 284.2L1058.2 287.3L1052.2 286.8L1030.7 278.7L1028.0 280.7L1028.5 287.2L1031.4 291.7L1036.3 295.2L1054.2 299.4L1061.3 303.7L1065.4 308.7L1067.5 313.7L1067.2 318.2ZM965.2 290.2L958.2 289.7L952.8 287.2L950.4 283.7L951.7 279.7L956.7 275.8L963.7 273.7L970.7 273.8L976.2 276.2L978.3 280.2L976.3 284.7L971.7 288.5ZM1098.7 329.8L1092.7 327.5L1086.8 320.7L1077.7 304.7L1068.9 291.7L1070.5 288.7L1068.6 285.7L1078.7 293.6L1091.7 307.2L1091.7 310.7L1099.8 326.7L1100.0 328.7ZM857.7 307.7L862.1 301.7L874.6 290.7ZM1122.2 421.3L1119.7 420.5L1117.6 414.2L1117.4 406.2L1120.0 386.7L1117.9 379.7L1109.9 364.7L1111.1 346.2L1107.8 330.7L1117.7 350.2L1117.5 354.2L1125.4 386.7L1125.7 409.2L1124.2 417.7ZM1100.7 402.3L1095.7 400.3L1092.3 394.2L1092.9 373.2L1089.7 364.5L1082.7 360.1L1070.2 361.7L1067.2 358.0L1063.9 349.2L1063.0 342.7L1064.4 336.7L1067.7 332.8L1072.7 332.9L1092.2 341.3L1098.2 348.1L1106.9 362.7L1107.8 366.7L1107.3 392.2L1104.8 399.2ZM840.4 390.7L845.4 385.2L848.8 376.2L848.9 367.7L845.7 363.6L842.7 364.1L839.1 367.2L834.9 376.7L835.4 387.7L837.7 390.7ZM1002.2 396.7L997.7 397.0L993.2 395.4L988.9 391.7L985.7 386.7L984.3 381.7L984.9 377.2L987.2 373.4L990.7 370.9L996.2 369.8L1003.2 370.9L1011.6 374.7L1017.2 379.2L1016.6 383.7L1012.5 390.2L1007.7 394.4ZM993.2 445.2L987.7 445.2L982.2 443.4L978.0 440.2L975.4 435.7L975.1 430.2L977.1 424.7L980.7 420.3L985.2 418.0L990.2 417.6L995.2 419.8L1000.8 425.2L1004.0 431.2L1004.2 435.7L1002.2 440.3L998.2 443.6ZM841.2 485.2L834.1 471.7L826.7 451.7L822.1 432.2L821.2 419.6L825.6 423.7L827.1 428.2L827.7 434.7L826.3 445.2L827.7 453.2L831.7 462.8L840.9 479.2ZM1094.2 450.2L1090.7 450.3L1088.2 447.8L1087.7 437.7L1092.7 426.2L1096.2 423.0L1099.7 422.4L1102.5 424.2L1104.5 427.7L1105.0 437.2L1101.2 445.1ZM915.7 484.2L910.2 483.9L904.7 481.7L898.9 477.2L895.8 472.7L895.6 446.7L897.4 439.7L910.7 425.3L914.2 423.0L925.7 425.8L941.7 426.8L947.7 429.0L952.4 432.7L955.5 437.7L956.1 442.7L954.5 447.7L951.7 450.9L947.7 452.6L929.7 450.8L923.0 453.2L920.4 457.2L919.9 462.7L926.0 479.7L923.5 482.2ZM883.7 507.7L874.7 507.4L864.2 504.1L857.2 499.2L850.3 491.2L843.2 479.7L841.4 469.7L833.2 447.7L832.4 442.7L833.2 440.2L843.2 441.5L847.2 444.8L849.8 455.7L847.4 467.7L847.6 472.2L852.0 479.2L859.7 485.9L863.7 486.9L865.7 484.7L864.3 468.2L866.7 463.0L870.2 461.9L874.7 462.7L883.4 469.7L885.8 475.2L886.7 490.2L894.4 504.7L892.3 506.2ZM1107.2 474.3L1106.2 473.7L1106.2 467.2L1108.9 454.7L1113.2 446.7L1118.2 442.9L1119.7 447.2L1117.7 456.1L1113.2 465.9ZM877.7 527.2L870.2 521.3L860.2 510.3ZM1013.7 539.2L1007.7 539.0L1003.8 536.7L1003.5 533.7L1006.7 528.9L1012.2 524.1L1017.7 521.6L1023.7 521.3L1028.0 523.2L1030.0 527.7L1027.4 533.2L1021.7 537.1ZM969.2 544.7L960.7 543.7L955.4 539.7L955.0 533.2L959.2 526.4L963.7 526.4L972.7 529.0L978.0 531.7L981.2 534.9L981.6 537.7L979.5 540.7L974.7 543.5ZM1025.2 553.2L1022.4 550.7L1022.7 548.2L1032.7 540.8L1043.7 537.5L1045.8 538.2L1046.7 542.0L1050.2 541.4L1036.7 548.8ZM979.7 561.7L976.7 561.6L972.6 557.7L972.9 555.7L975.9 553.7L990.2 551.7L995.7 552.4L998.4 554.2L995.5 558.7L999.7 559.7Z" fill="none" stroke="#1a1400" stroke-width="9" stroke-linejoin="round" filter="url(#bl)" opacity="0.55" transform="translate(1.5,2)"/>
<path d="M1004.7 266.7L984.1 262.7L980.6 260.2L980.3 256.2L978.7 255.1L962.2 253.7L991.7 254.1L1018.7 259.6L1032.7 265.2L1017.8 260.2L1007.7 258.5L1005.8 259.2L1006.5 264.7ZM959.2 560.7L939.2 557.8L914.7 549.8L912.7 548.2L922.2 549.9L920.5 546.7L913.7 542.5L890.8 532.7L884.5 527.2L883.2 522.7L886.7 522.0L901.7 527.0L906.7 525.9L906.8 521.2L897.9 507.7L898.5 505.7L909.7 504.8L926.7 508.9L932.2 507.3L935.3 503.2L936.6 497.7L932.2 481.7L954.7 468.9L967.2 467.1L993.2 470.2L1000.2 468.2L1015.7 459.4L1021.7 459.4L1035.2 462.9L1041.7 461.0L1045.1 457.2L1047.1 452.2L1047.6 447.2L1046.3 442.7L1041.7 438.8L1029.5 435.7L1024.7 433.3L1021.6 429.2L1021.3 423.7L1024.4 416.7L1029.7 412.5L1035.2 411.7L1047.7 413.3L1053.9 410.7L1056.6 406.7L1057.7 401.7L1056.9 396.7L1054.7 392.6L1049.7 389.0L1033.2 385.5L1023.3 380.2L1021.7 377.2L1025.2 363.7L1024.4 357.2L1016.7 350.1L1004.7 345.6L990.2 346.0L968.7 354.3L950.7 352.2L944.7 352.8L937.4 357.2L926.7 370.5L924.2 371.3L920.7 370.0L912.7 362.4L909.7 355.2L911.5 349.2L923.1 338.2L926.4 331.7L926.2 326.2L923.2 318.5L920.2 313.9L917.2 313.0L910.2 316.3L901.7 332.4L896.2 338.1L890.2 339.5L876.7 337.7L872.0 339.2L868.1 349.2L868.7 358.4L872.7 362.1L883.2 363.3L887.2 365.2L889.7 369.6L892.7 383.1L897.2 387.1L909.8 385.2L927.7 377.6L947.2 377.1L956.2 379.0L961.5 383.2L963.7 388.7L962.7 395.7L958.7 401.2L954.7 403.2L949.7 403.6L934.2 397.7L929.2 397.8L924.7 401.6L915.2 416.3L912.2 417.9L906.2 414.5L873.2 388.2L868.7 386.2L864.2 386.6L860.2 389.5L857.3 394.7L856.4 400.7L857.6 406.2L862.7 411.3L873.2 412.4L876.7 413.9L879.3 417.7L881.0 424.7L880.9 430.7L879.1 434.7L875.2 437.4L870.2 438.1L850.2 434.6L842.4 418.7L838.7 414.5L835.7 414.1L829.7 417.6L828.2 417.3L824.7 397.2L821.2 393.7L824.7 370.7L828.7 369.2L830.7 367.1L835.7 354.2L836.7 347.0L833.7 344.7L840.6 330.7L848.6 319.2L846.9 331.2L851.2 340.3L856.7 340.9L868.4 336.2L878.4 322.7L900.4 313.2L903.3 310.7L904.4 307.7L902.2 294.7L900.7 292.8L898.2 292.8L888.2 298.9L874.7 316.4L869.7 318.0L864.2 317.3L863.1 314.2L865.5 309.2L880.8 293.7L884.5 288.2L884.5 286.2L882.7 286.0L874.7 290.2L892.7 276.6L909.2 267.6L928.7 260.1L942.2 256.7L954.3 259.2L956.0 261.2L954.5 263.7L947.2 267.4L938.2 269.2L931.7 268.2L929.7 262.5L915.6 266.2L910.0 269.2L906.6 272.7L908.0 283.7L910.2 284.7L921.7 284.4L926.4 286.2L928.1 290.2L925.5 301.2L925.8 304.7L928.7 306.1L941.2 306.8L946.2 309.1L949.0 313.2L952.4 325.2L958.2 329.7L966.7 330.0L973.4 326.2L975.6 320.7L974.3 309.2L975.0 304.7L978.2 300.6L983.7 298.9L991.2 299.8L996.9 303.2L999.1 307.2L1001.8 319.7L1007.7 325.7L1016.2 327.4L1030.7 323.1L1033.2 323.7L1037.2 329.7L1039.6 336.2L1039.1 352.2L1040.9 357.7L1046.2 362.9L1052.7 366.5L1068.7 367.2L1074.7 379.6L1079.6 395.2L1078.4 408.7L1069.5 432.7L1069.4 453.7L1065.9 460.2L1054.5 473.2L1053.1 477.7L1054.0 482.2L1058.2 486.3L1064.2 486.1L1069.7 482.3L1082.2 468.9L1085.7 467.5L1088.7 468.7L1090.4 473.7L1089.0 479.7L1074.5 501.2L1074.3 505.2L1076.7 506.9L1080.7 505.7L1085.7 501.7L1104.2 479.4L1105.4 479.7L1105.8 485.2L1107.7 484.4L1098.2 499.4L1075.2 522.1L1069.7 524.9L1060.2 526.9L1056.7 526.4L1054.7 524.4L1052.6 513.2L1050.7 509.6L1039.1 505.7L1035.9 503.2L1034.5 499.2L1034.1 487.2L1030.1 482.7L1021.2 482.9L1012.9 487.7L1010.1 493.7L1009.7 509.3L1006.2 513.4L1000.7 515.4L993.2 515.0L988.3 512.2L986.2 508.2L984.2 497.7L980.2 493.0L973.2 490.9L965.7 492.5L962.2 495.2L960.1 499.2L961.3 514.7L958.7 522.2L955.2 523.4L935.7 520.8L930.9 524.2L928.4 530.2L928.9 534.7L931.3 539.2L945.4 550.7L947.8 557.2ZM1064.7 320.9L1047.2 317.1L1033.7 320.4L1031.7 319.7L1003.4 284.2L1001.9 278.7L1004.7 272.9L1008.7 269.9L1022.7 271.7L1034.7 268.8L1040.7 270.9L1048.7 276.4L1057.2 284.2L1058.2 287.3L1052.2 286.8L1030.7 278.7L1028.0 280.7L1028.5 287.2L1031.4 291.7L1036.3 295.2L1054.2 299.4L1061.3 303.7L1065.4 308.7L1067.5 313.7L1067.2 318.2ZM965.2 290.2L958.2 289.7L952.8 287.2L950.4 283.7L951.7 279.7L956.7 275.8L963.7 273.7L970.7 273.8L976.2 276.2L978.3 280.2L976.3 284.7L971.7 288.5ZM1098.7 329.8L1092.7 327.5L1086.8 320.7L1077.7 304.7L1068.9 291.7L1070.5 288.7L1068.6 285.7L1078.7 293.6L1091.7 307.2L1091.7 310.7L1099.8 326.7L1100.0 328.7ZM857.7 307.7L862.1 301.7L874.6 290.7ZM1122.2 421.3L1119.7 420.5L1117.6 414.2L1117.4 406.2L1120.0 386.7L1117.9 379.7L1109.9 364.7L1111.1 346.2L1107.8 330.7L1117.7 350.2L1117.5 354.2L1125.4 386.7L1125.7 409.2L1124.2 417.7ZM1100.7 402.3L1095.7 400.3L1092.3 394.2L1092.9 373.2L1089.7 364.5L1082.7 360.1L1070.2 361.7L1067.2 358.0L1063.9 349.2L1063.0 342.7L1064.4 336.7L1067.7 332.8L1072.7 332.9L1092.2 341.3L1098.2 348.1L1106.9 362.7L1107.8 366.7L1107.3 392.2L1104.8 399.2ZM840.4 390.7L845.4 385.2L848.8 376.2L848.9 367.7L845.7 363.6L842.7 364.1L839.1 367.2L834.9 376.7L835.4 387.7L837.7 390.7ZM1002.2 396.7L997.7 397.0L993.2 395.4L988.9 391.7L985.7 386.7L984.3 381.7L984.9 377.2L987.2 373.4L990.7 370.9L996.2 369.8L1003.2 370.9L1011.6 374.7L1017.2 379.2L1016.6 383.7L1012.5 390.2L1007.7 394.4ZM993.2 445.2L987.7 445.2L982.2 443.4L978.0 440.2L975.4 435.7L975.1 430.2L977.1 424.7L980.7 420.3L985.2 418.0L990.2 417.6L995.2 419.8L1000.8 425.2L1004.0 431.2L1004.2 435.7L1002.2 440.3L998.2 443.6ZM841.2 485.2L834.1 471.7L826.7 451.7L822.1 432.2L821.2 419.6L825.6 423.7L827.1 428.2L827.7 434.7L826.3 445.2L827.7 453.2L831.7 462.8L840.9 479.2ZM1094.2 450.2L1090.7 450.3L1088.2 447.8L1087.7 437.7L1092.7 426.2L1096.2 423.0L1099.7 422.4L1102.5 424.2L1104.5 427.7L1105.0 437.2L1101.2 445.1ZM915.7 484.2L910.2 483.9L904.7 481.7L898.9 477.2L895.8 472.7L895.6 446.7L897.4 439.7L910.7 425.3L914.2 423.0L925.7 425.8L941.7 426.8L947.7 429.0L952.4 432.7L955.5 437.7L956.1 442.7L954.5 447.7L951.7 450.9L947.7 452.6L929.7 450.8L923.0 453.2L920.4 457.2L919.9 462.7L926.0 479.7L923.5 482.2ZM883.7 507.7L874.7 507.4L864.2 504.1L857.2 499.2L850.3 491.2L843.2 479.7L841.4 469.7L833.2 447.7L832.4 442.7L833.2 440.2L843.2 441.5L847.2 444.8L849.8 455.7L847.4 467.7L847.6 472.2L852.0 479.2L859.7 485.9L863.7 486.9L865.7 484.7L864.3 468.2L866.7 463.0L870.2 461.9L874.7 462.7L883.4 469.7L885.8 475.2L886.7 490.2L894.4 504.7L892.3 506.2ZM1107.2 474.3L1106.2 473.7L1106.2 467.2L1108.9 454.7L1113.2 446.7L1118.2 442.9L1119.7 447.2L1117.7 456.1L1113.2 465.9ZM877.7 527.2L870.2 521.3L860.2 510.3ZM1013.7 539.2L1007.7 539.0L1003.8 536.7L1003.5 533.7L1006.7 528.9L1012.2 524.1L1017.7 521.6L1023.7 521.3L1028.0 523.2L1030.0 527.7L1027.4 533.2L1021.7 537.1ZM969.2 544.7L960.7 543.7L955.4 539.7L955.0 533.2L959.2 526.4L963.7 526.4L972.7 529.0L978.0 531.7L981.2 534.9L981.6 537.7L979.5 540.7L974.7 543.5ZM1025.2 553.2L1022.4 550.7L1022.7 548.2L1032.7 540.8L1043.7 537.5L1045.8 538.2L1046.7 542.0L1050.2 541.4L1036.7 548.8ZM979.7 561.7L976.7 561.6L972.6 557.7L972.9 555.7L975.9 553.7L990.2 551.7L995.7 552.4L998.4 554.2L995.5 558.7L999.7 559.7Z" fill="none" stroke="#2a2000" stroke-width="7.4" stroke-linejoin="round" filter="url(#bl2)" opacity="0.75"/>
<path d="M1004.7 266.7L984.1 262.7L980.6 260.2L980.3 256.2L978.7 255.1L962.2 253.7L991.7 254.1L1018.7 259.6L1032.7 265.2L1017.8 260.2L1007.7 258.5L1005.8 259.2L1006.5 264.7ZM959.2 560.7L939.2 557.8L914.7 549.8L912.7 548.2L922.2 549.9L920.5 546.7L913.7 542.5L890.8 532.7L884.5 527.2L883.2 522.7L886.7 522.0L901.7 527.0L906.7 525.9L906.8 521.2L897.9 507.7L898.5 505.7L909.7 504.8L926.7 508.9L932.2 507.3L935.3 503.2L936.6 497.7L932.2 481.7L954.7 468.9L967.2 467.1L993.2 470.2L1000.2 468.2L1015.7 459.4L1021.7 459.4L1035.2 462.9L1041.7 461.0L1045.1 457.2L1047.1 452.2L1047.6 447.2L1046.3 442.7L1041.7 438.8L1029.5 435.7L1024.7 433.3L1021.6 429.2L1021.3 423.7L1024.4 416.7L1029.7 412.5L1035.2 411.7L1047.7 413.3L1053.9 410.7L1056.6 406.7L1057.7 401.7L1056.9 396.7L1054.7 392.6L1049.7 389.0L1033.2 385.5L1023.3 380.2L1021.7 377.2L1025.2 363.7L1024.4 357.2L1016.7 350.1L1004.7 345.6L990.2 346.0L968.7 354.3L950.7 352.2L944.7 352.8L937.4 357.2L926.7 370.5L924.2 371.3L920.7 370.0L912.7 362.4L909.7 355.2L911.5 349.2L923.1 338.2L926.4 331.7L926.2 326.2L923.2 318.5L920.2 313.9L917.2 313.0L910.2 316.3L901.7 332.4L896.2 338.1L890.2 339.5L876.7 337.7L872.0 339.2L868.1 349.2L868.7 358.4L872.7 362.1L883.2 363.3L887.2 365.2L889.7 369.6L892.7 383.1L897.2 387.1L909.8 385.2L927.7 377.6L947.2 377.1L956.2 379.0L961.5 383.2L963.7 388.7L962.7 395.7L958.7 401.2L954.7 403.2L949.7 403.6L934.2 397.7L929.2 397.8L924.7 401.6L915.2 416.3L912.2 417.9L906.2 414.5L873.2 388.2L868.7 386.2L864.2 386.6L860.2 389.5L857.3 394.7L856.4 400.7L857.6 406.2L862.7 411.3L873.2 412.4L876.7 413.9L879.3 417.7L881.0 424.7L880.9 430.7L879.1 434.7L875.2 437.4L870.2 438.1L850.2 434.6L842.4 418.7L838.7 414.5L835.7 414.1L829.7 417.6L828.2 417.3L824.7 397.2L821.2 393.7L824.7 370.7L828.7 369.2L830.7 367.1L835.7 354.2L836.7 347.0L833.7 344.7L840.6 330.7L848.6 319.2L846.9 331.2L851.2 340.3L856.7 340.9L868.4 336.2L878.4 322.7L900.4 313.2L903.3 310.7L904.4 307.7L902.2 294.7L900.7 292.8L898.2 292.8L888.2 298.9L874.7 316.4L869.7 318.0L864.2 317.3L863.1 314.2L865.5 309.2L880.8 293.7L884.5 288.2L884.5 286.2L882.7 286.0L874.7 290.2L892.7 276.6L909.2 267.6L928.7 260.1L942.2 256.7L954.3 259.2L956.0 261.2L954.5 263.7L947.2 267.4L938.2 269.2L931.7 268.2L929.7 262.5L915.6 266.2L910.0 269.2L906.6 272.7L908.0 283.7L910.2 284.7L921.7 284.4L926.4 286.2L928.1 290.2L925.5 301.2L925.8 304.7L928.7 306.1L941.2 306.8L946.2 309.1L949.0 313.2L952.4 325.2L958.2 329.7L966.7 330.0L973.4 326.2L975.6 320.7L974.3 309.2L975.0 304.7L978.2 300.6L983.7 298.9L991.2 299.8L996.9 303.2L999.1 307.2L1001.8 319.7L1007.7 325.7L1016.2 327.4L1030.7 323.1L1033.2 323.7L1037.2 329.7L1039.6 336.2L1039.1 352.2L1040.9 357.7L1046.2 362.9L1052.7 366.5L1068.7 367.2L1074.7 379.6L1079.6 395.2L1078.4 408.7L1069.5 432.7L1069.4 453.7L1065.9 460.2L1054.5 473.2L1053.1 477.7L1054.0 482.2L1058.2 486.3L1064.2 486.1L1069.7 482.3L1082.2 468.9L1085.7 467.5L1088.7 468.7L1090.4 473.7L1089.0 479.7L1074.5 501.2L1074.3 505.2L1076.7 506.9L1080.7 505.7L1085.7 501.7L1104.2 479.4L1105.4 479.7L1105.8 485.2L1107.7 484.4L1098.2 499.4L1075.2 522.1L1069.7 524.9L1060.2 526.9L1056.7 526.4L1054.7 524.4L1052.6 513.2L1050.7 509.6L1039.1 505.7L1035.9 503.2L1034.5 499.2L1034.1 487.2L1030.1 482.7L1021.2 482.9L1012.9 487.7L1010.1 493.7L1009.7 509.3L1006.2 513.4L1000.7 515.4L993.2 515.0L988.3 512.2L986.2 508.2L984.2 497.7L980.2 493.0L973.2 490.9L965.7 492.5L962.2 495.2L960.1 499.2L961.3 514.7L958.7 522.2L955.2 523.4L935.7 520.8L930.9 524.2L928.4 530.2L928.9 534.7L931.3 539.2L945.4 550.7L947.8 557.2ZM1064.7 320.9L1047.2 317.1L1033.7 320.4L1031.7 319.7L1003.4 284.2L1001.9 278.7L1004.7 272.9L1008.7 269.9L1022.7 271.7L1034.7 268.8L1040.7 270.9L1048.7 276.4L1057.2 284.2L1058.2 287.3L1052.2 286.8L1030.7 278.7L1028.0 280.7L1028.5 287.2L1031.4 291.7L1036.3 295.2L1054.2 299.4L1061.3 303.7L1065.4 308.7L1067.5 313.7L1067.2 318.2ZM965.2 290.2L958.2 289.7L952.8 287.2L950.4 283.7L951.7 279.7L956.7 275.8L963.7 273.7L970.7 273.8L976.2 276.2L978.3 280.2L976.3 284.7L971.7 288.5ZM1098.7 329.8L1092.7 327.5L1086.8 320.7L1077.7 304.7L1068.9 291.7L1070.5 288.7L1068.6 285.7L1078.7 293.6L1091.7 307.2L1091.7 310.7L1099.8 326.7L1100.0 328.7ZM857.7 307.7L862.1 301.7L874.6 290.7ZM1122.2 421.3L1119.7 420.5L1117.6 414.2L1117.4 406.2L1120.0 386.7L1117.9 379.7L1109.9 364.7L1111.1 346.2L1107.8 330.7L1117.7 350.2L1117.5 354.2L1125.4 386.7L1125.7 409.2L1124.2 417.7ZM1100.7 402.3L1095.7 400.3L1092.3 394.2L1092.9 373.2L1089.7 364.5L1082.7 360.1L1070.2 361.7L1067.2 358.0L1063.9 349.2L1063.0 342.7L1064.4 336.7L1067.7 332.8L1072.7 332.9L1092.2 341.3L1098.2 348.1L1106.9 362.7L1107.8 366.7L1107.3 392.2L1104.8 399.2ZM840.4 390.7L845.4 385.2L848.8 376.2L848.9 367.7L845.7 363.6L842.7 364.1L839.1 367.2L834.9 376.7L835.4 387.7L837.7 390.7ZM1002.2 396.7L997.7 397.0L993.2 395.4L988.9 391.7L985.7 386.7L984.3 381.7L984.9 377.2L987.2 373.4L990.7 370.9L996.2 369.8L1003.2 370.9L1011.6 374.7L1017.2 379.2L1016.6 383.7L1012.5 390.2L1007.7 394.4ZM993.2 445.2L987.7 445.2L982.2 443.4L978.0 440.2L975.4 435.7L975.1 430.2L977.1 424.7L980.7 420.3L985.2 418.0L990.2 417.6L995.2 419.8L1000.8 425.2L1004.0 431.2L1004.2 435.7L1002.2 440.3L998.2 443.6ZM841.2 485.2L834.1 471.7L826.7 451.7L822.1 432.2L821.2 419.6L825.6 423.7L827.1 428.2L827.7 434.7L826.3 445.2L827.7 453.2L831.7 462.8L840.9 479.2ZM1094.2 450.2L1090.7 450.3L1088.2 447.8L1087.7 437.7L1092.7 426.2L1096.2 423.0L1099.7 422.4L1102.5 424.2L1104.5 427.7L1105.0 437.2L1101.2 445.1ZM915.7 484.2L910.2 483.9L904.7 481.7L898.9 477.2L895.8 472.7L895.6 446.7L897.4 439.7L910.7 425.3L914.2 423.0L925.7 425.8L941.7 426.8L947.7 429.0L952.4 432.7L955.5 437.7L956.1 442.7L954.5 447.7L951.7 450.9L947.7 452.6L929.7 450.8L923.0 453.2L920.4 457.2L919.9 462.7L926.0 479.7L923.5 482.2ZM883.7 507.7L874.7 507.4L864.2 504.1L857.2 499.2L850.3 491.2L843.2 479.7L841.4 469.7L833.2 447.7L832.4 442.7L833.2 440.2L843.2 441.5L847.2 444.8L849.8 455.7L847.4 467.7L847.6 472.2L852.0 479.2L859.7 485.9L863.7 486.9L865.7 484.7L864.3 468.2L866.7 463.0L870.2 461.9L874.7 462.7L883.4 469.7L885.8 475.2L886.7 490.2L894.4 504.7L892.3 506.2ZM1107.2 474.3L1106.2 473.7L1106.2 467.2L1108.9 454.7L1113.2 446.7L1118.2 442.9L1119.7 447.2L1117.7 456.1L1113.2 465.9ZM877.7 527.2L870.2 521.3L860.2 510.3ZM1013.7 539.2L1007.7 539.0L1003.8 536.7L1003.5 533.7L1006.7 528.9L1012.2 524.1L1017.7 521.6L1023.7 521.3L1028.0 523.2L1030.0 527.7L1027.4 533.2L1021.7 537.1ZM969.2 544.7L960.7 543.7L955.4 539.7L955.0 533.2L959.2 526.4L963.7 526.4L972.7 529.0L978.0 531.7L981.2 534.9L981.6 537.7L979.5 540.7L974.7 543.5ZM1025.2 553.2L1022.4 550.7L1022.7 548.2L1032.7 540.8L1043.7 537.5L1045.8 538.2L1046.7 542.0L1050.2 541.4L1036.7 548.8ZM979.7 561.7L976.7 561.6L972.6 557.7L972.9 555.7L975.9 553.7L990.2 551.7L995.7 552.4L998.4 554.2L995.5 558.7L999.7 559.7Z" fill="none" stroke="#eccc00" stroke-width="5.8" stroke-linejoin="round"/>
<path d="M1004.7 266.7L984.1 262.7L980.6 260.2L980.3 256.2L978.7 255.1L962.2 253.7L991.7 254.1L1018.7 259.6L1032.7 265.2L1017.8 260.2L1007.7 258.5L1005.8 259.2L1006.5 264.7ZM959.2 560.7L939.2 557.8L914.7 549.8L912.7 548.2L922.2 549.9L920.5 546.7L913.7 542.5L890.8 532.7L884.5 527.2L883.2 522.7L886.7 522.0L901.7 527.0L906.7 525.9L906.8 521.2L897.9 507.7L898.5 505.7L909.7 504.8L926.7 508.9L932.2 507.3L935.3 503.2L936.6 497.7L932.2 481.7L954.7 468.9L967.2 467.1L993.2 470.2L1000.2 468.2L1015.7 459.4L1021.7 459.4L1035.2 462.9L1041.7 461.0L1045.1 457.2L1047.1 452.2L1047.6 447.2L1046.3 442.7L1041.7 438.8L1029.5 435.7L1024.7 433.3L1021.6 429.2L1021.3 423.7L1024.4 416.7L1029.7 412.5L1035.2 411.7L1047.7 413.3L1053.9 410.7L1056.6 406.7L1057.7 401.7L1056.9 396.7L1054.7 392.6L1049.7 389.0L1033.2 385.5L1023.3 380.2L1021.7 377.2L1025.2 363.7L1024.4 357.2L1016.7 350.1L1004.7 345.6L990.2 346.0L968.7 354.3L950.7 352.2L944.7 352.8L937.4 357.2L926.7 370.5L924.2 371.3L920.7 370.0L912.7 362.4L909.7 355.2L911.5 349.2L923.1 338.2L926.4 331.7L926.2 326.2L923.2 318.5L920.2 313.9L917.2 313.0L910.2 316.3L901.7 332.4L896.2 338.1L890.2 339.5L876.7 337.7L872.0 339.2L868.1 349.2L868.7 358.4L872.7 362.1L883.2 363.3L887.2 365.2L889.7 369.6L892.7 383.1L897.2 387.1L909.8 385.2L927.7 377.6L947.2 377.1L956.2 379.0L961.5 383.2L963.7 388.7L962.7 395.7L958.7 401.2L954.7 403.2L949.7 403.6L934.2 397.7L929.2 397.8L924.7 401.6L915.2 416.3L912.2 417.9L906.2 414.5L873.2 388.2L868.7 386.2L864.2 386.6L860.2 389.5L857.3 394.7L856.4 400.7L857.6 406.2L862.7 411.3L873.2 412.4L876.7 413.9L879.3 417.7L881.0 424.7L880.9 430.7L879.1 434.7L875.2 437.4L870.2 438.1L850.2 434.6L842.4 418.7L838.7 414.5L835.7 414.1L829.7 417.6L828.2 417.3L824.7 397.2L821.2 393.7L824.7 370.7L828.7 369.2L830.7 367.1L835.7 354.2L836.7 347.0L833.7 344.7L840.6 330.7L848.6 319.2L846.9 331.2L851.2 340.3L856.7 340.9L868.4 336.2L878.4 322.7L900.4 313.2L903.3 310.7L904.4 307.7L902.2 294.7L900.7 292.8L898.2 292.8L888.2 298.9L874.7 316.4L869.7 318.0L864.2 317.3L863.1 314.2L865.5 309.2L880.8 293.7L884.5 288.2L884.5 286.2L882.7 286.0L874.7 290.2L892.7 276.6L909.2 267.6L928.7 260.1L942.2 256.7L954.3 259.2L956.0 261.2L954.5 263.7L947.2 267.4L938.2 269.2L931.7 268.2L929.7 262.5L915.6 266.2L910.0 269.2L906.6 272.7L908.0 283.7L910.2 284.7L921.7 284.4L926.4 286.2L928.1 290.2L925.5 301.2L925.8 304.7L928.7 306.1L941.2 306.8L946.2 309.1L949.0 313.2L952.4 325.2L958.2 329.7L966.7 330.0L973.4 326.2L975.6 320.7L974.3 309.2L975.0 304.7L978.2 300.6L983.7 298.9L991.2 299.8L996.9 303.2L999.1 307.2L1001.8 319.7L1007.7 325.7L1016.2 327.4L1030.7 323.1L1033.2 323.7L1037.2 329.7L1039.6 336.2L1039.1 352.2L1040.9 357.7L1046.2 362.9L1052.7 366.5L1068.7 367.2L1074.7 379.6L1079.6 395.2L1078.4 408.7L1069.5 432.7L1069.4 453.7L1065.9 460.2L1054.5 473.2L1053.1 477.7L1054.0 482.2L1058.2 486.3L1064.2 486.1L1069.7 482.3L1082.2 468.9L1085.7 467.5L1088.7 468.7L1090.4 473.7L1089.0 479.7L1074.5 501.2L1074.3 505.2L1076.7 506.9L1080.7 505.7L1085.7 501.7L1104.2 479.4L1105.4 479.7L1105.8 485.2L1107.7 484.4L1098.2 499.4L1075.2 522.1L1069.7 524.9L1060.2 526.9L1056.7 526.4L1054.7 524.4L1052.6 513.2L1050.7 509.6L1039.1 505.7L1035.9 503.2L1034.5 499.2L1034.1 487.2L1030.1 482.7L1021.2 482.9L1012.9 487.7L1010.1 493.7L1009.7 509.3L1006.2 513.4L1000.7 515.4L993.2 515.0L988.3 512.2L986.2 508.2L984.2 497.7L980.2 493.0L973.2 490.9L965.7 492.5L962.2 495.2L960.1 499.2L961.3 514.7L958.7 522.2L955.2 523.4L935.7 520.8L930.9 524.2L928.4 530.2L928.9 534.7L931.3 539.2L945.4 550.7L947.8 557.2ZM1064.7 320.9L1047.2 317.1L1033.7 320.4L1031.7 319.7L1003.4 284.2L1001.9 278.7L1004.7 272.9L1008.7 269.9L1022.7 271.7L1034.7 268.8L1040.7 270.9L1048.7 276.4L1057.2 284.2L1058.2 287.3L1052.2 286.8L1030.7 278.7L1028.0 280.7L1028.5 287.2L1031.4 291.7L1036.3 295.2L1054.2 299.4L1061.3 303.7L1065.4 308.7L1067.5 313.7L1067.2 318.2ZM965.2 290.2L958.2 289.7L952.8 287.2L950.4 283.7L951.7 279.7L956.7 275.8L963.7 273.7L970.7 273.8L976.2 276.2L978.3 280.2L976.3 284.7L971.7 288.5ZM1098.7 329.8L1092.7 327.5L1086.8 320.7L1077.7 304.7L1068.9 291.7L1070.5 288.7L1068.6 285.7L1078.7 293.6L1091.7 307.2L1091.7 310.7L1099.8 326.7L1100.0 328.7ZM857.7 307.7L862.1 301.7L874.6 290.7ZM1122.2 421.3L1119.7 420.5L1117.6 414.2L1117.4 406.2L1120.0 386.7L1117.9 379.7L1109.9 364.7L1111.1 346.2L1107.8 330.7L1117.7 350.2L1117.5 354.2L1125.4 386.7L1125.7 409.2L1124.2 417.7ZM1100.7 402.3L1095.7 400.3L1092.3 394.2L1092.9 373.2L1089.7 364.5L1082.7 360.1L1070.2 361.7L1067.2 358.0L1063.9 349.2L1063.0 342.7L1064.4 336.7L1067.7 332.8L1072.7 332.9L1092.2 341.3L1098.2 348.1L1106.9 362.7L1107.8 366.7L1107.3 392.2L1104.8 399.2ZM840.4 390.7L845.4 385.2L848.8 376.2L848.9 367.7L845.7 363.6L842.7 364.1L839.1 367.2L834.9 376.7L835.4 387.7L837.7 390.7ZM1002.2 396.7L997.7 397.0L993.2 395.4L988.9 391.7L985.7 386.7L984.3 381.7L984.9 377.2L987.2 373.4L990.7 370.9L996.2 369.8L1003.2 370.9L1011.6 374.7L1017.2 379.2L1016.6 383.7L1012.5 390.2L1007.7 394.4ZM993.2 445.2L987.7 445.2L982.2 443.4L978.0 440.2L975.4 435.7L975.1 430.2L977.1 424.7L980.7 420.3L985.2 418.0L990.2 417.6L995.2 419.8L1000.8 425.2L1004.0 431.2L1004.2 435.7L1002.2 440.3L998.2 443.6ZM841.2 485.2L834.1 471.7L826.7 451.7L822.1 432.2L821.2 419.6L825.6 423.7L827.1 428.2L827.7 434.7L826.3 445.2L827.7 453.2L831.7 462.8L840.9 479.2ZM1094.2 450.2L1090.7 450.3L1088.2 447.8L1087.7 437.7L1092.7 426.2L1096.2 423.0L1099.7 422.4L1102.5 424.2L1104.5 427.7L1105.0 437.2L1101.2 445.1ZM915.7 484.2L910.2 483.9L904.7 481.7L898.9 477.2L895.8 472.7L895.6 446.7L897.4 439.7L910.7 425.3L914.2 423.0L925.7 425.8L941.7 426.8L947.7 429.0L952.4 432.7L955.5 437.7L956.1 442.7L954.5 447.7L951.7 450.9L947.7 452.6L929.7 450.8L923.0 453.2L920.4 457.2L919.9 462.7L926.0 479.7L923.5 482.2ZM883.7 507.7L874.7 507.4L864.2 504.1L857.2 499.2L850.3 491.2L843.2 479.7L841.4 469.7L833.2 447.7L832.4 442.7L833.2 440.2L843.2 441.5L847.2 444.8L849.8 455.7L847.4 467.7L847.6 472.2L852.0 479.2L859.7 485.9L863.7 486.9L865.7 484.7L864.3 468.2L866.7 463.0L870.2 461.9L874.7 462.7L883.4 469.7L885.8 475.2L886.7 490.2L894.4 504.7L892.3 506.2ZM1107.2 474.3L1106.2 473.7L1106.2 467.2L1108.9 454.7L1113.2 446.7L1118.2 442.9L1119.7 447.2L1117.7 456.1L1113.2 465.9ZM877.7 527.2L870.2 521.3L860.2 510.3ZM1013.7 539.2L1007.7 539.0L1003.8 536.7L1003.5 533.7L1006.7 528.9L1012.2 524.1L1017.7 521.6L1023.7 521.3L1028.0 523.2L1030.0 527.7L1027.4 533.2L1021.7 537.1ZM969.2 544.7L960.7 543.7L955.4 539.7L955.0 533.2L959.2 526.4L963.7 526.4L972.7 529.0L978.0 531.7L981.2 534.9L981.6 537.7L979.5 540.7L974.7 543.5ZM1025.2 553.2L1022.4 550.7L1022.7 548.2L1032.7 540.8L1043.7 537.5L1045.8 538.2L1046.7 542.0L1050.2 541.4L1036.7 548.8ZM979.7 561.7L976.7 561.6L972.6 557.7L972.9 555.7L975.9 553.7L990.2 551.7L995.7 552.4L998.4 554.2L995.5 558.7L999.7 559.7Z" fill="none" stroke="#fbe000" stroke-width="1.6" stroke-linejoin="round" transform="translate(-0.7,-0.9)" opacity="0.8"/>
<circle cx="974.5" cy="407.5" r="155.3" fill="none" stroke="#3a3000" stroke-width="3" opacity="0.35" filter="url(#bl2)"/>
</g>
</svg>
<svg class="a" style="left:201px;top:886.5px" width="1094" height="234.5" viewBox="201 886.5 1094 234.5">
<rect x="201" y="886.5" width="1094" height="234.5" fill="#000"/>
<path d="M222.8 886.5V1103.4H1295" stroke="#9a9a9a" stroke-width="1" fill="none"/>
<path d="M232.9 1103.4V1100.4M253.3 1103.4V1098.4M273.7 1103.4V1100.4M294.2 1103.4V1100.4M314.6 1103.4V1100.4M335.1 1103.4V1100.4M355.5 1103.4V1098.4M375.9 1103.4V1100.4M396.4 1103.4V1100.4M416.8 1103.4V1100.4M437.3 1103.4V1100.4M457.7 1103.4V1098.4M478.1 1103.4V1100.4M498.6 1103.4V1100.4M519.0 1103.4V1100.4M539.5 1103.4V1100.4M559.9 1103.4V1098.4M580.3 1103.4V1100.4M600.8 1103.4V1100.4M621.2 1103.4V1100.4M641.7 1103.4V1100.4M662.1 1103.4V1098.4M682.5 1103.4V1100.4M703.0 1103.4V1100.4M723.4 1103.4V1100.4M743.9 1103.4V1100.4M764.3 1103.4V1098.4M784.7 1103.4V1100.4M805.2 1103.4V1100.4M825.6 1103.4V1100.4M846.1 1103.4V1100.4M866.5 1103.4V1098.4M886.9 1103.4V1100.4M907.4 1103.4V1100.4M927.8 1103.4V1100.4M948.3 1103.4V1100.4M968.7 1103.4V1098.4M989.1 1103.4V1100.4M1009.6 1103.4V1100.4M1030.0 1103.4V1100.4M1050.5 1103.4V1100.4M1070.9 1103.4V1098.4M1091.3 1103.4V1100.4M1111.8 1103.4V1100.4M1132.2 1103.4V1100.4M1152.7 1103.4V1100.4M1173.1 1103.4V1098.4M1193.5 1103.4V1100.4M1214.0 1103.4V1100.4M1234.4 1103.4V1100.4M1254.9 1103.4V1100.4M1275.3 1103.4V1098.4M222.8 1099.5H225.8M222.8 1092.4H225.8M222.8 1085.2H225.8M222.8 1078.1H225.8M222.8 1071.0H228.3M222.8 1063.9H225.8M222.8 1056.8H225.8M222.8 1049.6H225.8M222.8 1042.5H225.8M222.8 1035.4H228.3M222.8 1028.3H225.8M222.8 1021.2H225.8M222.8 1014.0H225.8M222.8 1006.9H225.8M222.8 999.8H228.3M222.8 992.7H225.8M222.8 985.6H225.8M222.8 978.4H225.8M222.8 971.3H225.8M222.8 964.2H228.3M222.8 957.1H225.8M222.8 950.0H225.8M222.8 942.8H225.8M222.8 935.7H225.8M222.8 928.6H228.3M222.8 921.5H225.8M222.8 914.4H225.8M222.8 907.2H225.8M222.8 900.1H225.8M222.8 893.0H228.3" stroke="#9a9a9a" stroke-width="0.8" fill="none"/>
<text x="253.3" y="1116.4" font-family="Liberation Sans" font-size="10" fill="#a8a8a8" text-anchor="middle">0</text>
<text x="355.5" y="1116.4" font-family="Liberation Sans" font-size="10" fill="#a8a8a8" text-anchor="middle">10</text>
<text x="457.7" y="1116.4" font-family="Liberation Sans" font-size="10" fill="#a8a8a8" text-anchor="middle">20</text>
<text x="559.9" y="1116.4" font-family="Liberation Sans" font-size="10" fill="#a8a8a8" text-anchor="middle">30</text>
<text x="662.1" y="1116.4" font-family="Liberation Sans" font-size="10" fill="#a8a8a8" text-anchor="middle">40</text>
<text x="764.3" y="1116.4" font-family="Liberation Sans" font-size="10" fill="#a8a8a8" text-anchor="middle">50</text>
<text x="866.5" y="1116.4" font-family="Liberation Sans" font-size="10" fill="#a8a8a8" text-anchor="middle">60</text>
<text x="968.7" y="1116.4" font-family="Liberation Sans" font-size="10" fill="#a8a8a8" text-anchor="middle">70</text>
<text x="1070.9" y="1116.4" font-family="Liberation Sans" font-size="10" fill="#a8a8a8" text-anchor="middle">80</text>
<text x="1173.1" y="1116.4" font-family="Liberation Sans" font-size="10" fill="#a8a8a8" text-anchor="middle">90</text>
<text x="1275.3" y="1116.4" font-family="Liberation Sans" font-size="10" fill="#a8a8a8" text-anchor="middle">100</text>
<text x="219" y="896.6" font-family="Liberation Sans" font-size="10" fill="#a8a8a8" text-anchor="end">3</text>
<text x="219" y="932.2" font-family="Liberation Sans" font-size="10" fill="#a8a8a8" text-anchor="end">2</text>
<text x="219" y="967.8" font-family="Liberation Sans" font-size="10" fill="#a8a8a8" text-anchor="end">1</text>
<text x="219" y="1003.4" font-family="Liberation Sans" font-size="10" fill="#a8a8a8" text-anchor="end">0</text>
<text x="219" y="1039.0" font-family="Liberation Sans" font-size="10" fill="#a8a8a8" text-anchor="end">-1</text>
<text x="219" y="1074.6" font-family="Liberation Sans" font-size="10" fill="#a8a8a8" text-anchor="end">-2</text>
<polyline points="253.3,980.9 263.5,997.7 273.7,1008.7 284.0,975.9 294.2,1001.9 304.4,1013.0 314.6,974.2 324.8,964.9 335.1,915.4 345.3,938.2 355.5,1004.4 365.7,1030.8 375.9,957.1 386.2,982.0 396.4,982.0 406.6,900.5 416.8,988.4 427.0,1076.3 437.3,1029.7 447.5,1011.5 457.7,1014.4 467.9,1028.6 478.1,972.4 488.4,1001.6 498.6,1030.1 508.8,999.4 519.0,1019.7 529.2,1028.3 539.5,1019.7 549.7,1029.3 559.9,1000.5 570.1,1039.0 580.3,1029.3 590.6,929.3 600.8,985.9 611.0,948.9 621.2,1025.4 631.4,1018.0 641.7,1011.5 651.9,989.5 662.1,984.1 672.3,1068.5 682.5,1035.0 692.8,946.0 703.0,1021.5 713.2,1002.6 723.4,1001.6 733.6,1061.7 743.9,1046.8 754.1,973.5 764.3,1032.2 774.5,1010.8 784.7,982.7 795.0,986.6 805.2,1006.2 815.4,1045.4 825.6,971.7 835.8,956.7 846.1,1014.0 856.3,1054.3 866.5,1019.4 876.7,984.1 886.9,989.5 897.2,1039.0 907.4,922.9 917.6,1043.6 927.8,925.4 938.0,1001.6 948.3,1030.1 958.5,966.3 968.7,966.3 978.9,982.4 989.1,954.2 999.4,964.2 1009.6,1032.6 1019.8,1049.3 1030.0,958.5 1040.2,1007.3 1050.5,1030.1 1060.7,1000.9 1070.9,1014.8 1081.1,1032.2 1091.3,952.8 1101.6,1010.8 1111.8,1011.5 1122.0,978.1 1132.2,1022.6 1142.4,1032.9 1152.7,998.7 1162.9,1017.6 1173.1,1089.5 1183.3,986.6 1193.5,1051.1 1203.8,1058.9 1214.0,1062.5 1224.2,1006.6 1234.4,1052.1 1244.6,975.6 1254.9,1032.2 1265.1,995.5" fill="none" stroke="#e8e000" stroke-width="1.1" stroke-linejoin="miter"/>
</svg>
<div class="t" style="left:644.50px;top:1140.54px;font-size:10px;color:#dcdcdc;">Plot:</div>
<div class="a" style="left:1313px;top:886.5px;width:381.5px;height:234px;background:#2b2b2b;border-right:1px solid #1f1f1f;border-bottom:1px solid #1f1f1f"></div>
<svg class="a" style="left:1351px;top:889px" width="305" height="228" viewBox="1351 889 305 228">
<rect x="1351" y="889" width="305" height="228" fill="#222"/>
<defs>
<radialGradient id="cg" cx="1497.2" cy="981" r="145.5" gradientTransform="translate(0 981) scale(1 1.1512) translate(0 -981)" gradientUnits="userSpaceOnUse"><stop offset="0" stop-color="#a8a8a8"/><stop offset="0.7" stop-color="#9e9e9e"/><stop offset="0.93" stop-color="#8a8a8a"/><stop offset="1" stop-color="#b5b5b5"/></radialGradient>
<filter id="cb" x="-20%" y="-20%" width="140%" height="140%"><feGaussianBlur stdDeviation="0.8"/></filter>
<filter id="cb2" x="-20%" y="-20%" width="140%" height="140%"><feGaussianBlur stdDeviation="2.2"/></filter>
<clipPath id="cc"><ellipse cx="1497.2" cy="981" rx="145.5" ry="167.5"/></clipPath>
</defs>
<ellipse cx="1497.2" cy="981" rx="145.5" ry="167.5" fill="url(#cg)"/>
<g clip-path="url(#cc)">
<path d="M1499.7 1146.8L1488.3 1146.8L1480.6 1145.0L1480.0 1143.3L1484.4 1140.4L1483.8 1138.1L1477.7 1134.9L1468.2 1132.8L1461.2 1132.7L1456.2 1140.5L1439.7 1133.5L1437.7 1130.7L1421.0 1118.0L1417.0 1111.7L1418.2 1109.9L1422.3 1108.8L1421.9 1105.3L1405.3 1080.6L1387.2 1059.5L1378.9 1036.8L1370.2 1021.7L1368.1 1010.9L1369.3 989.6L1363.7 987.1L1360.3 989.6L1358.8 1016.1L1356.2 1012.4L1354.5 1002.3L1353.1 973.5L1354.1 957.4L1355.6 950.5L1356.7 959.9L1358.7 962.6L1365.5 952.2L1362.6 933.8L1364.5 921.7L1367.7 915.7L1370.7 913.4L1373.7 924.7L1376.2 925.9L1382.2 920.6L1385.3 914.2L1385.8 907.3L1383.9 890.6L1382.7 890.0L1378.2 892.2L1377.2 891.7L1379.7 884.3L1393.7 865.3L1391.0 871.6L1390.7 876.3L1393.2 875.8L1397.7 871.7L1410.3 853.2L1408.7 852.4L1402.2 856.1L1416.7 842.8L1443.2 826.6L1470.7 817.4L1473.6 817.5L1454.7 823.3L1445.7 831.6L1425.7 841.0L1418.7 846.9L1418.7 849.8L1424.2 851.4L1429.2 850.7L1449.7 831.8L1463.5 826.2L1475.2 823.1L1486.7 822.7L1488.7 823.9L1488.7 825.6L1484.4 829.6L1468.2 834.3L1462.0 837.7L1460.2 840.6L1460.6 843.4L1466.2 846.3L1472.7 846.5L1479.2 844.9L1499.2 833.2L1526.7 832.2L1530.2 829.6L1531.4 826.2L1522.2 823.8L1495.7 821.3L1494.2 820.4L1494.4 818.7L1498.7 816.8L1526.2 818.1L1551.2 826.7L1565.2 834.1L1577.7 842.8L1593.2 856.6L1602.7 867.6L1608.8 879.7L1608.6 881.4L1605.4 883.1L1604.6 885.5L1608.7 896.7L1612.7 901.9L1616.7 903.9L1622.2 901.6L1621.2 895.8L1626.7 907.3L1632.1 926.9L1635.7 933.8L1640.2 957.4L1641.4 981.0L1640.7 995.0L1639.2 999.3L1636.7 999.6L1635.4 1001.7L1628.7 1035.7L1621.2 1051.2L1615.2 1054.6L1606.2 1062.5L1603.2 1063.3L1601.7 1061.0L1601.3 1055.8L1604.4 1044.9L1609.2 1039.3L1617.7 1035.7L1621.7 1028.8L1623.4 1019.0L1621.7 1010.1L1620.2 1008.7L1611.7 1015.1L1602.2 1020.5L1590.7 1032.4L1585.7 1033.5L1582.0 1028.8L1578.5 1020.1L1578.0 1003.4L1566.4 991.4L1563.4 986.2L1562.6 981.6L1565.1 976.4L1570.7 971.2L1576.2 968.3L1580.7 968.6L1584.1 972.4L1585.6 978.1L1583.4 1000.6L1586.2 1002.6L1591.7 1004.0L1595.7 1003.9L1598.7 1002.3L1602.2 993.7L1601.2 974.7L1602.7 966.0L1606.2 960.7L1613.7 959.1L1615.6 956.2L1616.1 946.5L1614.9 935.0L1609.0 916.5L1595.6 897.0L1588.2 879.7L1583.7 874.1L1569.7 861.9L1561.7 844.3L1552.2 842.9L1546.2 844.7L1545.7 848.6L1550.7 861.3L1548.7 864.5L1544.2 865.8L1539.2 865.2L1534.7 862.8L1526.7 850.9L1522.7 847.6L1516.2 846.0L1510.2 847.2L1507.7 849.3L1506.9 852.6L1511.8 863.6L1512.1 868.2L1509.2 872.5L1504.2 874.8L1499.2 874.8L1494.7 872.9L1486.7 861.6L1481.7 858.3L1473.7 858.9L1462.2 867.3L1458.7 868.2L1452.2 865.1L1443.9 856.1L1435.7 854.4L1428.2 856.2L1403.2 875.1L1400.2 883.7L1400.7 887.4L1402.7 889.2L1408.2 887.7L1419.2 877.4L1424.2 874.7L1427.7 874.8L1430.2 876.5L1432.0 883.7L1430.9 889.5L1428.6 892.9L1417.2 900.6L1406.2 910.2L1394.2 916.5L1389.7 922.3L1388.6 938.4L1390.2 944.2L1395.0 951.1L1394.3 969.5L1397.2 980.2L1400.7 981.2L1406.7 977.9L1412.2 972.4L1414.4 967.2L1414.3 961.4L1412.2 956.6L1401.0 949.3L1399.5 947.0L1402.4 936.7L1408.2 927.5L1411.7 925.6L1415.7 926.4L1425.2 938.3L1432.2 940.8L1439.2 938.2L1448.7 927.7L1453.7 927.6L1466.2 935.0L1476.0 946.5L1479.8 954.5L1485.0 974.7L1488.7 979.0L1498.2 986.0L1501.6 990.8L1504.7 1006.9L1507.2 1012.2L1512.7 1016.2L1527.7 1019.8L1531.2 1021.9L1525.5 1034.5L1518.2 1041.6L1511.7 1042.2L1500.7 1037.2L1496.2 1036.3L1491.2 1038.0L1487.4 1042.6L1485.8 1048.9L1487.6 1054.1L1491.2 1057.5L1501.1 1063.3L1504.5 1067.9L1504.7 1074.2L1501.7 1079.4L1497.7 1081.6L1493.2 1081.7L1480.2 1075.8L1474.7 1075.0L1469.3 1077.1L1466.4 1081.7L1466.6 1086.3L1468.9 1090.4L1482.5 1099.0L1486.6 1104.2L1486.2 1108.8L1477.9 1116.3L1477.9 1119.1L1484.7 1124.3L1501.1 1130.7L1508.2 1136.4L1503.8 1141.6L1503.2 1145.6ZM1592.7 863.6L1593.3 859.5L1588.2 853.4L1568.7 842.6L1557.0 830.8L1544.2 825.5L1537.7 824.6L1534.4 825.6L1549.7 834.2L1561.7 843.7L1568.2 846.9L1586.2 862.2L1590.2 864.0ZM1487.2 922.3L1483.2 921.7L1479.7 919.2L1473.2 904.5L1468.7 901.8L1463.7 902.3L1459.2 904.6L1447.7 917.8L1441.7 917.3L1437.2 914.2L1434.2 909.6L1433.2 903.3L1434.3 897.5L1437.2 894.1L1449.7 886.2L1460.2 875.5L1463.2 874.7L1467.7 876.1L1475.1 881.4L1482.7 892.5L1498.3 899.8L1503.7 904.4L1503.0 908.5L1497.2 916.5L1492.2 920.7ZM1525.2 916.0L1522.2 915.5L1511.6 906.7L1510.2 903.9L1516.0 894.7L1526.2 886.3L1535.2 884.2L1551.2 887.8L1555.2 886.2L1562.2 880.4L1566.2 879.5L1572.2 882.1L1577.3 888.3L1578.8 893.5L1577.5 898.1L1561.7 910.6L1559.7 910.4L1551.2 904.2L1545.2 903.4L1538.2 906.2ZM1513.2 961.5L1508.2 961.0L1503.6 957.4L1501.0 951.6L1501.4 945.9L1506.7 938.5L1524.2 926.6L1527.7 926.5L1537.7 930.3L1544.7 929.8L1551.7 925.5L1561.2 914.0L1575.2 925.6L1579.7 925.7L1587.7 920.8L1591.2 920.1L1595.7 922.6L1599.0 928.0L1600.1 939.0L1598.4 943.0L1595.2 945.3L1586.7 946.4L1574.2 944.3L1568.2 944.9L1562.2 947.5L1551.7 955.9L1547.7 957.5L1535.7 952.3L1530.7 951.9ZM1622.3 998.3L1629.2 992.6L1634.7 993.0L1636.6 982.2L1633.3 936.1L1631.2 929.3L1626.7 926.4L1624.6 928.0L1624.1 933.2L1629.4 953.9L1629.6 961.4L1626.7 966.8L1618.4 967.2L1616.6 976.4L1617.7 991.0L1620.2 997.2ZM1387.0 1015.5L1390.6 1012.1L1394.0 1006.3L1394.7 997.1L1391.7 992.1L1380.7 988.5L1377.5 985.6L1377.1 980.4L1380.2 964.3L1380.4 956.8L1377.2 950.6L1371.2 948.3L1368.0 950.5L1366.9 953.9L1369.9 988.5L1372.7 992.8L1379.7 1011.8L1383.2 1015.5ZM1408.5 1058.1L1422.1 1045.5L1422.4 1030.5L1425.7 1022.9L1431.2 1018.2L1444.4 1012.1L1441.6 997.7L1442.3 990.8L1445.2 986.2L1455.9 977.0L1458.9 970.1L1457.3 962.0L1451.7 956.8L1445.2 956.4L1439.2 960.8L1432.1 971.8L1423.3 992.5L1406.4 1008.6L1405.5 1027.6L1403.3 1031.7L1396.7 1038.5L1395.4 1043.7L1396.9 1050.1L1400.2 1055.4L1404.2 1058.2ZM1551.2 1049.0L1548.7 1048.3L1540.7 1031.6L1532.8 1021.3L1532.7 1013.2L1525.1 993.1L1525.7 986.8L1528.7 981.7L1534.7 977.3L1542.2 974.7L1547.9 976.4L1550.8 982.7L1543.5 1004.6L1543.5 1010.4L1546.3 1012.7L1559.6 1017.3L1562.5 1020.1L1563.8 1023.6L1563.2 1030.5L1560.1 1039.1L1556.2 1045.1ZM1441.2 1067.3L1451.2 1062.9L1459.2 1056.1L1462.8 1048.9L1463.5 1035.7L1465.0 1031.1L1468.7 1027.0L1478.7 1020.3L1481.9 1016.1L1483.1 1011.5L1482.4 1006.3L1479.7 1001.2L1476.2 998.3L1472.2 997.5L1467.7 998.8L1447.0 1013.8L1448.8 1025.9L1447.5 1032.8L1443.3 1038.6L1432.4 1046.6L1430.4 1050.1L1431.5 1055.3L1435.7 1064.1L1438.2 1067.0ZM1372.7 1065.0L1363.2 1043.2L1365.7 1037.4L1370.2 1041.9L1375.0 1053.5L1375.4 1059.3ZM1531.2 1138.8L1521.7 1138.7L1516.5 1136.4L1540.0 1121.4L1547.1 1105.3L1547.4 1099.6L1545.7 1095.0L1540.2 1094.4L1531.7 1098.3L1528.5 1102.5L1523.7 1114.5L1517.5 1118.6L1511.2 1118.9L1506.0 1116.3L1503.4 1111.1L1504.7 1105.9L1509.2 1100.5L1522.7 1089.1L1524.9 1083.5L1527.6 1067.3L1533.7 1059.2L1544.2 1053.8L1548.2 1053.5L1548.9 1059.3L1547.0 1081.7L1548.7 1086.5L1552.7 1087.2L1559.7 1083.7L1564.2 1078.3L1566.4 1071.9L1567.9 1059.3L1570.3 1054.1L1577.2 1048.5L1582.7 1047.4L1584.9 1051.2L1585.4 1058.1L1583.4 1074.2L1581.2 1081.2L1569.3 1095.0L1561.6 1112.2L1556.2 1116.6L1543.7 1123.2L1542.3 1125.5L1541.2 1134.1L1536.7 1137.3ZM1607.7 1084.2L1606.7 1084.0L1607.1 1081.7L1619.7 1058.6L1622.2 1057.5L1623.6 1061.0L1615.2 1076.5ZM1455.5 1127.8L1459.6 1121.4L1468.8 1116.3L1468.5 1113.4L1461.2 1104.9L1448.0 1094.4L1437.7 1073.1L1433.7 1072.1L1426.2 1074.6L1422.2 1078.9L1422.9 1085.2L1427.2 1090.7L1438.3 1099.0L1441.0 1104.2L1439.7 1109.1L1431.5 1112.2L1431.3 1114.5L1435.7 1119.7L1442.2 1124.4L1450.2 1127.6ZM1584.7 1103.1L1582.7 1102.9L1582.4 1100.7L1587.2 1086.6L1592.7 1080.4L1597.7 1079.0L1600.8 1084.0L1600.3 1088.6L1593.2 1097.3ZM1401.7 1100.3L1394.2 1097.3L1386.1 1087.5L1381.2 1079.2L1385.2 1083.0L1388.7 1080.2L1394.2 1083.8L1402.0 1095.0L1403.0 1099.0ZM1558.7 1130.1L1556.6 1130.1L1556.6 1128.9L1564.7 1121.4L1572.2 1116.7L1582.2 1114.1L1597.7 1099.6L1589.7 1108.9L1577.7 1119.2L1565.2 1127.8Z" fill="none" stroke="#6a6a6a" stroke-width="6" stroke-linejoin="round" filter="url(#cb2)" opacity="0.8" transform="translate(1,1.5)"/>
<path d="M1499.7 1146.8L1488.3 1146.8L1480.6 1145.0L1480.0 1143.3L1484.4 1140.4L1483.8 1138.1L1477.7 1134.9L1468.2 1132.8L1461.2 1132.7L1456.2 1140.5L1439.7 1133.5L1437.7 1130.7L1421.0 1118.0L1417.0 1111.7L1418.2 1109.9L1422.3 1108.8L1421.9 1105.3L1405.3 1080.6L1387.2 1059.5L1378.9 1036.8L1370.2 1021.7L1368.1 1010.9L1369.3 989.6L1363.7 987.1L1360.3 989.6L1358.8 1016.1L1356.2 1012.4L1354.5 1002.3L1353.1 973.5L1354.1 957.4L1355.6 950.5L1356.7 959.9L1358.7 962.6L1365.5 952.2L1362.6 933.8L1364.5 921.7L1367.7 915.7L1370.7 913.4L1373.7 924.7L1376.2 925.9L1382.2 920.6L1385.3 914.2L1385.8 907.3L1383.9 890.6L1382.7 890.0L1378.2 892.2L1377.2 891.7L1379.7 884.3L1393.7 865.3L1391.0 871.6L1390.7 876.3L1393.2 875.8L1397.7 871.7L1410.3 853.2L1408.7 852.4L1402.2 856.1L1416.7 842.8L1443.2 826.6L1470.7 817.4L1473.6 817.5L1454.7 823.3L1445.7 831.6L1425.7 841.0L1418.7 846.9L1418.7 849.8L1424.2 851.4L1429.2 850.7L1449.7 831.8L1463.5 826.2L1475.2 823.1L1486.7 822.7L1488.7 823.9L1488.7 825.6L1484.4 829.6L1468.2 834.3L1462.0 837.7L1460.2 840.6L1460.6 843.4L1466.2 846.3L1472.7 846.5L1479.2 844.9L1499.2 833.2L1526.7 832.2L1530.2 829.6L1531.4 826.2L1522.2 823.8L1495.7 821.3L1494.2 820.4L1494.4 818.7L1498.7 816.8L1526.2 818.1L1551.2 826.7L1565.2 834.1L1577.7 842.8L1593.2 856.6L1602.7 867.6L1608.8 879.7L1608.6 881.4L1605.4 883.1L1604.6 885.5L1608.7 896.7L1612.7 901.9L1616.7 903.9L1622.2 901.6L1621.2 895.8L1626.7 907.3L1632.1 926.9L1635.7 933.8L1640.2 957.4L1641.4 981.0L1640.7 995.0L1639.2 999.3L1636.7 999.6L1635.4 1001.7L1628.7 1035.7L1621.2 1051.2L1615.2 1054.6L1606.2 1062.5L1603.2 1063.3L1601.7 1061.0L1601.3 1055.8L1604.4 1044.9L1609.2 1039.3L1617.7 1035.7L1621.7 1028.8L1623.4 1019.0L1621.7 1010.1L1620.2 1008.7L1611.7 1015.1L1602.2 1020.5L1590.7 1032.4L1585.7 1033.5L1582.0 1028.8L1578.5 1020.1L1578.0 1003.4L1566.4 991.4L1563.4 986.2L1562.6 981.6L1565.1 976.4L1570.7 971.2L1576.2 968.3L1580.7 968.6L1584.1 972.4L1585.6 978.1L1583.4 1000.6L1586.2 1002.6L1591.7 1004.0L1595.7 1003.9L1598.7 1002.3L1602.2 993.7L1601.2 974.7L1602.7 966.0L1606.2 960.7L1613.7 959.1L1615.6 956.2L1616.1 946.5L1614.9 935.0L1609.0 916.5L1595.6 897.0L1588.2 879.7L1583.7 874.1L1569.7 861.9L1561.7 844.3L1552.2 842.9L1546.2 844.7L1545.7 848.6L1550.7 861.3L1548.7 864.5L1544.2 865.8L1539.2 865.2L1534.7 862.8L1526.7 850.9L1522.7 847.6L1516.2 846.0L1510.2 847.2L1507.7 849.3L1506.9 852.6L1511.8 863.6L1512.1 868.2L1509.2 872.5L1504.2 874.8L1499.2 874.8L1494.7 872.9L1486.7 861.6L1481.7 858.3L1473.7 858.9L1462.2 867.3L1458.7 868.2L1452.2 865.1L1443.9 856.1L1435.7 854.4L1428.2 856.2L1403.2 875.1L1400.2 883.7L1400.7 887.4L1402.7 889.2L1408.2 887.7L1419.2 877.4L1424.2 874.7L1427.7 874.8L1430.2 876.5L1432.0 883.7L1430.9 889.5L1428.6 892.9L1417.2 900.6L1406.2 910.2L1394.2 916.5L1389.7 922.3L1388.6 938.4L1390.2 944.2L1395.0 951.1L1394.3 969.5L1397.2 980.2L1400.7 981.2L1406.7 977.9L1412.2 972.4L1414.4 967.2L1414.3 961.4L1412.2 956.6L1401.0 949.3L1399.5 947.0L1402.4 936.7L1408.2 927.5L1411.7 925.6L1415.7 926.4L1425.2 938.3L1432.2 940.8L1439.2 938.2L1448.7 927.7L1453.7 927.6L1466.2 935.0L1476.0 946.5L1479.8 954.5L1485.0 974.7L1488.7 979.0L1498.2 986.0L1501.6 990.8L1504.7 1006.9L1507.2 1012.2L1512.7 1016.2L1527.7 1019.8L1531.2 1021.9L1525.5 1034.5L1518.2 1041.6L1511.7 1042.2L1500.7 1037.2L1496.2 1036.3L1491.2 1038.0L1487.4 1042.6L1485.8 1048.9L1487.6 1054.1L1491.2 1057.5L1501.1 1063.3L1504.5 1067.9L1504.7 1074.2L1501.7 1079.4L1497.7 1081.6L1493.2 1081.7L1480.2 1075.8L1474.7 1075.0L1469.3 1077.1L1466.4 1081.7L1466.6 1086.3L1468.9 1090.4L1482.5 1099.0L1486.6 1104.2L1486.2 1108.8L1477.9 1116.3L1477.9 1119.1L1484.7 1124.3L1501.1 1130.7L1508.2 1136.4L1503.8 1141.6L1503.2 1145.6ZM1592.7 863.6L1593.3 859.5L1588.2 853.4L1568.7 842.6L1557.0 830.8L1544.2 825.5L1537.7 824.6L1534.4 825.6L1549.7 834.2L1561.7 843.7L1568.2 846.9L1586.2 862.2L1590.2 864.0ZM1487.2 922.3L1483.2 921.7L1479.7 919.2L1473.2 904.5L1468.7 901.8L1463.7 902.3L1459.2 904.6L1447.7 917.8L1441.7 917.3L1437.2 914.2L1434.2 909.6L1433.2 903.3L1434.3 897.5L1437.2 894.1L1449.7 886.2L1460.2 875.5L1463.2 874.7L1467.7 876.1L1475.1 881.4L1482.7 892.5L1498.3 899.8L1503.7 904.4L1503.0 908.5L1497.2 916.5L1492.2 920.7ZM1525.2 916.0L1522.2 915.5L1511.6 906.7L1510.2 903.9L1516.0 894.7L1526.2 886.3L1535.2 884.2L1551.2 887.8L1555.2 886.2L1562.2 880.4L1566.2 879.5L1572.2 882.1L1577.3 888.3L1578.8 893.5L1577.5 898.1L1561.7 910.6L1559.7 910.4L1551.2 904.2L1545.2 903.4L1538.2 906.2ZM1513.2 961.5L1508.2 961.0L1503.6 957.4L1501.0 951.6L1501.4 945.9L1506.7 938.5L1524.2 926.6L1527.7 926.5L1537.7 930.3L1544.7 929.8L1551.7 925.5L1561.2 914.0L1575.2 925.6L1579.7 925.7L1587.7 920.8L1591.2 920.1L1595.7 922.6L1599.0 928.0L1600.1 939.0L1598.4 943.0L1595.2 945.3L1586.7 946.4L1574.2 944.3L1568.2 944.9L1562.2 947.5L1551.7 955.9L1547.7 957.5L1535.7 952.3L1530.7 951.9ZM1622.3 998.3L1629.2 992.6L1634.7 993.0L1636.6 982.2L1633.3 936.1L1631.2 929.3L1626.7 926.4L1624.6 928.0L1624.1 933.2L1629.4 953.9L1629.6 961.4L1626.7 966.8L1618.4 967.2L1616.6 976.4L1617.7 991.0L1620.2 997.2ZM1387.0 1015.5L1390.6 1012.1L1394.0 1006.3L1394.7 997.1L1391.7 992.1L1380.7 988.5L1377.5 985.6L1377.1 980.4L1380.2 964.3L1380.4 956.8L1377.2 950.6L1371.2 948.3L1368.0 950.5L1366.9 953.9L1369.9 988.5L1372.7 992.8L1379.7 1011.8L1383.2 1015.5ZM1408.5 1058.1L1422.1 1045.5L1422.4 1030.5L1425.7 1022.9L1431.2 1018.2L1444.4 1012.1L1441.6 997.7L1442.3 990.8L1445.2 986.2L1455.9 977.0L1458.9 970.1L1457.3 962.0L1451.7 956.8L1445.2 956.4L1439.2 960.8L1432.1 971.8L1423.3 992.5L1406.4 1008.6L1405.5 1027.6L1403.3 1031.7L1396.7 1038.5L1395.4 1043.7L1396.9 1050.1L1400.2 1055.4L1404.2 1058.2ZM1551.2 1049.0L1548.7 1048.3L1540.7 1031.6L1532.8 1021.3L1532.7 1013.2L1525.1 993.1L1525.7 986.8L1528.7 981.7L1534.7 977.3L1542.2 974.7L1547.9 976.4L1550.8 982.7L1543.5 1004.6L1543.5 1010.4L1546.3 1012.7L1559.6 1017.3L1562.5 1020.1L1563.8 1023.6L1563.2 1030.5L1560.1 1039.1L1556.2 1045.1ZM1441.2 1067.3L1451.2 1062.9L1459.2 1056.1L1462.8 1048.9L1463.5 1035.7L1465.0 1031.1L1468.7 1027.0L1478.7 1020.3L1481.9 1016.1L1483.1 1011.5L1482.4 1006.3L1479.7 1001.2L1476.2 998.3L1472.2 997.5L1467.7 998.8L1447.0 1013.8L1448.8 1025.9L1447.5 1032.8L1443.3 1038.6L1432.4 1046.6L1430.4 1050.1L1431.5 1055.3L1435.7 1064.1L1438.2 1067.0ZM1372.7 1065.0L1363.2 1043.2L1365.7 1037.4L1370.2 1041.9L1375.0 1053.5L1375.4 1059.3ZM1531.2 1138.8L1521.7 1138.7L1516.5 1136.4L1540.0 1121.4L1547.1 1105.3L1547.4 1099.6L1545.7 1095.0L1540.2 1094.4L1531.7 1098.3L1528.5 1102.5L1523.7 1114.5L1517.5 1118.6L1511.2 1118.9L1506.0 1116.3L1503.4 1111.1L1504.7 1105.9L1509.2 1100.5L1522.7 1089.1L1524.9 1083.5L1527.6 1067.3L1533.7 1059.2L1544.2 1053.8L1548.2 1053.5L1548.9 1059.3L1547.0 1081.7L1548.7 1086.5L1552.7 1087.2L1559.7 1083.7L1564.2 1078.3L1566.4 1071.9L1567.9 1059.3L1570.3 1054.1L1577.2 1048.5L1582.7 1047.4L1584.9 1051.2L1585.4 1058.1L1583.4 1074.2L1581.2 1081.2L1569.3 1095.0L1561.6 1112.2L1556.2 1116.6L1543.7 1123.2L1542.3 1125.5L1541.2 1134.1L1536.7 1137.3ZM1607.7 1084.2L1606.7 1084.0L1607.1 1081.7L1619.7 1058.6L1622.2 1057.5L1623.6 1061.0L1615.2 1076.5ZM1455.5 1127.8L1459.6 1121.4L1468.8 1116.3L1468.5 1113.4L1461.2 1104.9L1448.0 1094.4L1437.7 1073.1L1433.7 1072.1L1426.2 1074.6L1422.2 1078.9L1422.9 1085.2L1427.2 1090.7L1438.3 1099.0L1441.0 1104.2L1439.7 1109.1L1431.5 1112.2L1431.3 1114.5L1435.7 1119.7L1442.2 1124.4L1450.2 1127.6ZM1584.7 1103.1L1582.7 1102.9L1582.4 1100.7L1587.2 1086.6L1592.7 1080.4L1597.7 1079.0L1600.8 1084.0L1600.3 1088.6L1593.2 1097.3ZM1401.7 1100.3L1394.2 1097.3L1386.1 1087.5L1381.2 1079.2L1385.2 1083.0L1388.7 1080.2L1394.2 1083.8L1402.0 1095.0L1403.0 1099.0ZM1558.7 1130.1L1556.6 1130.1L1556.6 1128.9L1564.7 1121.4L1572.2 1116.7L1582.2 1114.1L1597.7 1099.6L1589.7 1108.9L1577.7 1119.2L1565.2 1127.8Z" fill="none" stroke="#e2e2e2" stroke-width="2.8" stroke-linejoin="round" filter="url(#cb)" opacity="0.9"/>
<g fill="#444" opacity="0.6" filter="url(#cb2)"><ellipse cx="1419.8" cy="856.0" rx="4.5" ry="11" transform="rotate(-122 1418.8 854.5)"/><ellipse cx="1472.2" cy="856.0" rx="7.6" ry="11" transform="rotate(-102 1471.2 854.5)"/><ellipse cx="1524.8" cy="856.0" rx="7.6" ry="11" transform="rotate(-78 1523.8 854.5)"/><ellipse cx="1577.2" cy="856.0" rx="4.4" ry="11" transform="rotate(-58 1576.2 854.5)"/><ellipse cx="1393.5" cy="882.5" rx="4.3" ry="11" transform="rotate(-136 1392.5 881.0)"/><ellipse cx="1446.0" cy="882.5" rx="8.6" ry="11" transform="rotate(-118 1445.0 881.0)"/><ellipse cx="1498.5" cy="882.5" rx="9.6" ry="11" transform="rotate(-90 1497.5 881.0)"/><ellipse cx="1551.0" cy="882.5" rx="8.6" ry="11" transform="rotate(-62 1550.0 881.0)"/><ellipse cx="1603.5" cy="882.5" rx="4.2" ry="11" transform="rotate(-44 1602.5 881.0)"/><ellipse cx="1367.2" cy="909.0" rx="4.2" ry="11" transform="rotate(-151 1366.2 907.5)"/><ellipse cx="1419.8" cy="909.0" rx="8.6" ry="11" transform="rotate(-137 1418.8 907.5)"/><ellipse cx="1472.2" cy="909.0" rx="10.6" ry="11" transform="rotate(-109 1471.2 907.5)"/><ellipse cx="1524.8" cy="909.0" rx="10.6" ry="11" transform="rotate(-70 1523.8 907.5)"/><ellipse cx="1577.2" cy="909.0" rx="8.6" ry="11" transform="rotate(-43 1576.2 907.5)"/><ellipse cx="1629.8" cy="909.0" rx="4.2" ry="11" transform="rotate(-29 1628.8 907.5)"/><ellipse cx="1341.0" cy="935.5" rx="4.2" ry="11" transform="rotate(-163 1340.0 934.0)"/><ellipse cx="1393.5" cy="935.5" rx="7.6" ry="11" transform="rotate(-156 1392.5 934.0)"/><ellipse cx="1446.0" cy="935.5" rx="10.7" ry="11" transform="rotate(-138 1445.0 934.0)"/><ellipse cx="1498.5" cy="935.5" rx="11.5" ry="11" transform="rotate(-90 1497.5 934.0)"/><ellipse cx="1551.0" cy="935.5" rx="10.7" ry="11" transform="rotate(-42 1550.0 934.0)"/><ellipse cx="1603.5" cy="935.5" rx="7.6" ry="11" transform="rotate(-24 1602.5 934.0)"/><ellipse cx="1367.2" cy="962.0" rx="5.0" ry="11" transform="rotate(-171 1366.2 960.5)"/><ellipse cx="1419.8" cy="962.0" rx="10.0" ry="11" transform="rotate(-165 1418.8 960.5)"/><ellipse cx="1472.2" cy="962.0" rx="11.7" ry="11" transform="rotate(-142 1471.2 960.5)"/><ellipse cx="1524.8" cy="962.0" rx="11.7" ry="11" transform="rotate(-38 1523.8 960.5)"/><ellipse cx="1577.2" cy="962.0" rx="10.0" ry="11" transform="rotate(-15 1576.2 960.5)"/><ellipse cx="1629.8" cy="962.0" rx="4.9" ry="11" transform="rotate(-9 1628.8 960.5)"/><ellipse cx="1341.0" cy="988.5" rx="4.2" ry="11" transform="rotate(178 1340.0 987.0)"/><ellipse cx="1393.5" cy="988.5" rx="8.3" ry="11" transform="rotate(177 1392.5 987.0)"/><ellipse cx="1446.0" cy="988.5" rx="11.2" ry="11" transform="rotate(173 1445.0 987.0)"/><ellipse cx="1498.5" cy="988.5" rx="12.0" ry="11" transform="rotate(87 1497.5 987.0)"/><ellipse cx="1551.0" cy="988.5" rx="11.2" ry="11" transform="rotate(6 1550.0 987.0)"/><ellipse cx="1603.5" cy="988.5" rx="8.3" ry="11" transform="rotate(3 1602.5 987.0)"/><ellipse cx="1656.0" cy="988.5" rx="4.2" ry="11" transform="rotate(2 1655.0 987.0)"/><ellipse cx="1367.2" cy="1015.0" rx="4.7" ry="11" transform="rotate(166 1366.2 1013.5)"/><ellipse cx="1419.8" cy="1015.0" rx="9.8" ry="11" transform="rotate(157 1418.8 1013.5)"/><ellipse cx="1472.2" cy="1015.0" rx="11.6" ry="11" transform="rotate(129 1471.2 1013.5)"/><ellipse cx="1524.8" cy="1015.0" rx="11.6" ry="11" transform="rotate(51 1523.8 1013.5)"/><ellipse cx="1577.2" cy="1015.0" rx="9.8" ry="11" transform="rotate(22 1576.2 1013.5)"/><ellipse cx="1629.8" cy="1015.0" rx="4.6" ry="11" transform="rotate(14 1628.8 1013.5)"/><ellipse cx="1393.5" cy="1041.5" rx="7.2" ry="11" transform="rotate(151 1392.5 1040.0)"/><ellipse cx="1446.0" cy="1041.5" rx="10.4" ry="11" transform="rotate(132 1445.0 1040.0)"/><ellipse cx="1498.5" cy="1041.5" rx="11.2" ry="11" transform="rotate(90 1497.5 1040.0)"/><ellipse cx="1551.0" cy="1041.5" rx="10.4" ry="11" transform="rotate(48 1550.0 1040.0)"/><ellipse cx="1603.5" cy="1041.5" rx="7.1" ry="11" transform="rotate(29 1602.5 1040.0)"/><ellipse cx="1367.2" cy="1068.0" rx="4.2" ry="11" transform="rotate(147 1366.2 1066.5)"/><ellipse cx="1419.8" cy="1068.0" rx="8.0" ry="11" transform="rotate(133 1418.8 1066.5)"/><ellipse cx="1472.2" cy="1068.0" rx="10.1" ry="11" transform="rotate(107 1471.2 1066.5)"/><ellipse cx="1524.8" cy="1068.0" rx="10.1" ry="11" transform="rotate(73 1523.8 1066.5)"/><ellipse cx="1577.2" cy="1068.0" rx="8.0" ry="11" transform="rotate(47 1576.2 1066.5)"/><ellipse cx="1629.8" cy="1068.0" rx="4.2" ry="11" transform="rotate(33 1628.8 1066.5)"/><ellipse cx="1393.5" cy="1094.5" rx="4.2" ry="11" transform="rotate(133 1392.5 1093.0)"/><ellipse cx="1446.0" cy="1094.5" rx="7.8" ry="11" transform="rotate(115 1445.0 1093.0)"/><ellipse cx="1498.5" cy="1094.5" rx="8.9" ry="11" transform="rotate(90 1497.5 1093.0)"/><ellipse cx="1551.0" cy="1094.5" rx="7.8" ry="11" transform="rotate(65 1550.0 1093.0)"/><ellipse cx="1603.5" cy="1094.5" rx="4.2" ry="11" transform="rotate(47 1602.5 1093.0)"/><ellipse cx="1419.8" cy="1121.0" rx="4.2" ry="11" transform="rotate(120 1418.8 1119.5)"/><ellipse cx="1472.2" cy="1121.0" rx="6.4" ry="11" transform="rotate(101 1471.2 1119.5)"/><ellipse cx="1524.8" cy="1121.0" rx="6.4" ry="11" transform="rotate(79 1523.8 1119.5)"/><ellipse cx="1577.2" cy="1121.0" rx="4.2" ry="11" transform="rotate(60 1576.2 1119.5)"/></g>
<g fill="#161616" filter="url(#cb)"><ellipse cx="1418.8" cy="854.5" rx="2.9" ry="7.8" transform="rotate(-122 1418.8 854.5)"/><ellipse cx="1471.2" cy="854.5" rx="4.9" ry="7.8" transform="rotate(-102 1471.2 854.5)"/><ellipse cx="1523.8" cy="854.5" rx="4.9" ry="7.8" transform="rotate(-78 1523.8 854.5)"/><ellipse cx="1576.2" cy="854.5" rx="2.9" ry="7.8" transform="rotate(-58 1576.2 854.5)"/><ellipse cx="1392.5" cy="881.0" rx="2.8" ry="7.8" transform="rotate(-136 1392.5 881.0)"/><ellipse cx="1445.0" cy="881.0" rx="5.6" ry="7.8" transform="rotate(-118 1445.0 881.0)"/><ellipse cx="1497.5" cy="881.0" rx="6.3" ry="7.8" transform="rotate(-90 1497.5 881.0)"/><ellipse cx="1550.0" cy="881.0" rx="5.6" ry="7.8" transform="rotate(-62 1550.0 881.0)"/><ellipse cx="1602.5" cy="881.0" rx="2.7" ry="7.8" transform="rotate(-44 1602.5 881.0)"/><ellipse cx="1366.2" cy="907.5" rx="2.7" ry="7.8" transform="rotate(-151 1366.2 907.5)"/><ellipse cx="1418.8" cy="907.5" rx="5.6" ry="7.8" transform="rotate(-137 1418.8 907.5)"/><ellipse cx="1471.2" cy="907.5" rx="6.9" ry="7.8" transform="rotate(-109 1471.2 907.5)"/><ellipse cx="1523.8" cy="907.5" rx="6.9" ry="7.8" transform="rotate(-70 1523.8 907.5)"/><ellipse cx="1576.2" cy="907.5" rx="5.6" ry="7.8" transform="rotate(-43 1576.2 907.5)"/><ellipse cx="1628.8" cy="907.5" rx="2.7" ry="7.8" transform="rotate(-29 1628.8 907.5)"/><ellipse cx="1340.0" cy="934.0" rx="2.7" ry="7.8" transform="rotate(-163 1340.0 934.0)"/><ellipse cx="1392.5" cy="934.0" rx="5.0" ry="7.8" transform="rotate(-156 1392.5 934.0)"/><ellipse cx="1445.0" cy="934.0" rx="6.9" ry="7.8" transform="rotate(-138 1445.0 934.0)"/><ellipse cx="1497.5" cy="934.0" rx="7.5" ry="7.8" transform="rotate(-90 1497.5 934.0)"/><ellipse cx="1550.0" cy="934.0" rx="6.9" ry="7.8" transform="rotate(-42 1550.0 934.0)"/><ellipse cx="1602.5" cy="934.0" rx="4.9" ry="7.8" transform="rotate(-24 1602.5 934.0)"/><ellipse cx="1366.2" cy="960.5" rx="3.3" ry="7.8" transform="rotate(-171 1366.2 960.5)"/><ellipse cx="1418.8" cy="960.5" rx="6.5" ry="7.8" transform="rotate(-165 1418.8 960.5)"/><ellipse cx="1471.2" cy="960.5" rx="7.6" ry="7.8" transform="rotate(-142 1471.2 960.5)"/><ellipse cx="1523.8" cy="960.5" rx="7.6" ry="7.8" transform="rotate(-38 1523.8 960.5)"/><ellipse cx="1576.2" cy="960.5" rx="6.5" ry="7.8" transform="rotate(-15 1576.2 960.5)"/><ellipse cx="1628.8" cy="960.5" rx="3.2" ry="7.8" transform="rotate(-9 1628.8 960.5)"/><ellipse cx="1340.0" cy="987.0" rx="2.7" ry="7.8" transform="rotate(178 1340.0 987.0)"/><ellipse cx="1392.5" cy="987.0" rx="5.4" ry="7.8" transform="rotate(177 1392.5 987.0)"/><ellipse cx="1445.0" cy="987.0" rx="7.3" ry="7.8" transform="rotate(173 1445.0 987.0)"/><ellipse cx="1497.5" cy="987.0" rx="7.8" ry="7.8" transform="rotate(87 1497.5 987.0)"/><ellipse cx="1550.0" cy="987.0" rx="7.3" ry="7.8" transform="rotate(6 1550.0 987.0)"/><ellipse cx="1602.5" cy="987.0" rx="5.4" ry="7.8" transform="rotate(3 1602.5 987.0)"/><ellipse cx="1655.0" cy="987.0" rx="2.7" ry="7.8" transform="rotate(2 1655.0 987.0)"/><ellipse cx="1366.2" cy="1013.5" rx="3.0" ry="7.8" transform="rotate(166 1366.2 1013.5)"/><ellipse cx="1418.8" cy="1013.5" rx="6.4" ry="7.8" transform="rotate(157 1418.8 1013.5)"/><ellipse cx="1471.2" cy="1013.5" rx="7.5" ry="7.8" transform="rotate(129 1471.2 1013.5)"/><ellipse cx="1523.8" cy="1013.5" rx="7.5" ry="7.8" transform="rotate(51 1523.8 1013.5)"/><ellipse cx="1576.2" cy="1013.5" rx="6.4" ry="7.8" transform="rotate(22 1576.2 1013.5)"/><ellipse cx="1628.8" cy="1013.5" rx="3.0" ry="7.8" transform="rotate(14 1628.8 1013.5)"/><ellipse cx="1392.5" cy="1040.0" rx="4.7" ry="7.8" transform="rotate(151 1392.5 1040.0)"/><ellipse cx="1445.0" cy="1040.0" rx="6.7" ry="7.8" transform="rotate(132 1445.0 1040.0)"/><ellipse cx="1497.5" cy="1040.0" rx="7.3" ry="7.8" transform="rotate(90 1497.5 1040.0)"/><ellipse cx="1550.0" cy="1040.0" rx="6.7" ry="7.8" transform="rotate(48 1550.0 1040.0)"/><ellipse cx="1602.5" cy="1040.0" rx="4.6" ry="7.8" transform="rotate(29 1602.5 1040.0)"/><ellipse cx="1366.2" cy="1066.5" rx="2.7" ry="7.8" transform="rotate(147 1366.2 1066.5)"/><ellipse cx="1418.8" cy="1066.5" rx="5.2" ry="7.8" transform="rotate(133 1418.8 1066.5)"/><ellipse cx="1471.2" cy="1066.5" rx="6.6" ry="7.8" transform="rotate(107 1471.2 1066.5)"/><ellipse cx="1523.8" cy="1066.5" rx="6.6" ry="7.8" transform="rotate(73 1523.8 1066.5)"/><ellipse cx="1576.2" cy="1066.5" rx="5.2" ry="7.8" transform="rotate(47 1576.2 1066.5)"/><ellipse cx="1628.8" cy="1066.5" rx="2.7" ry="7.8" transform="rotate(33 1628.8 1066.5)"/><ellipse cx="1392.5" cy="1093.0" rx="2.7" ry="7.8" transform="rotate(133 1392.5 1093.0)"/><ellipse cx="1445.0" cy="1093.0" rx="5.1" ry="7.8" transform="rotate(115 1445.0 1093.0)"/><ellipse cx="1497.5" cy="1093.0" rx="5.8" ry="7.8" transform="rotate(90 1497.5 1093.0)"/><ellipse cx="1550.0" cy="1093.0" rx="5.1" ry="7.8" transform="rotate(65 1550.0 1093.0)"/><ellipse cx="1602.5" cy="1093.0" rx="2.7" ry="7.8" transform="rotate(47 1602.5 1093.0)"/><ellipse cx="1418.8" cy="1119.5" rx="2.7" ry="7.8" transform="rotate(120 1418.8 1119.5)"/><ellipse cx="1471.2" cy="1119.5" rx="4.2" ry="7.8" transform="rotate(101 1471.2 1119.5)"/><ellipse cx="1523.8" cy="1119.5" rx="4.1" ry="7.8" transform="rotate(79 1523.8 1119.5)"/><ellipse cx="1576.2" cy="1119.5" rx="2.7" ry="7.8" transform="rotate(60 1576.2 1119.5)"/></g>
</g>
</svg>
<div class="t" style="left:1451.80px;top:1147.54px;font-size:10px;color:#dcdcdc;">Camera:</div>
<div class="a" style="left:1071.5px;top:1161px;width:1.5px;height:1.5px;background:#666"></div>
<div class="a" style="left:1074.5px;top:1161px;width:1.5px;height:1.5px;background:#666"></div>
<div class="a" style="left:1077.5px;top:1161px;width:1.5px;height:1.5px;background:#666"></div>
<div class="a" style="left:1080.5px;top:1161px;width:1.5px;height:1.5px;background:#666"></div>
<div class="a" style="left:1083.5px;top:1161px;width:1.5px;height:1.5px;background:#666"></div>
<div class="a" style="left:17px;top:1171px;width:1974px;height:1px;background:#0a0a0a"></div>
<div class="a" style="left:17px;top:1172px;width:1974px;height:121px;background:#fff"></div>
<div class="t" style="left:21.5px;top:1178.1px;font-family:'Liberation Mono',monospace;font-size:9.55px;color:#262626;white-space:pre">Python 3.12.9 (tags/v3.12.9:fdb8142, Feb  4 2025, 15:27:58) [MSC v.1942 64 bit (AMD64)]</div>
<div class="t" style="left:21.5px;top:1191.1px;font-family:'Liberation Mono',monospace;font-size:9.55px;color:#262626;white-space:pre">Type 'copyright', 'credits' or 'license' for more information</div>
<div class="t" style="left:21.5px;top:1204.1px;font-family:'Liberation Mono',monospace;font-size:9.55px;color:#262626;white-space:pre">IPython 9.2.0 -- An enhanced Interactive Python. Type '?' for help.</div>
<div class="t" style="left:21.5px;top:1217.1px;font-family:'Liberation Mono',monospace;font-size:9.55px;color:#262626;white-space:pre">Tip: Run your doctests from within IPython for development and debugging. The special %doctest_mode command toggles a mode where the prompt, output and exceptions display matches as closely as possible that of the default Python interpreter.</div>
<div class="t" style="left:21.5px;top:1243.1px;font-family:'Liberation Mono',monospace;font-size:9.55px;color:#262626;white-space:pre"><span style="color:#000080">In [<b>5</b>]: </span>lamssi_env.realtimeplot_1.start()</div>
<div class="t" style="left:21.5px;top:1268.6px;font-family:'Liberation Mono',monospace;font-size:9.55px;color:#262626;white-space:pre"><span style="color:#000080">In [<b>6</b>]: </span></div>
</body></html>
